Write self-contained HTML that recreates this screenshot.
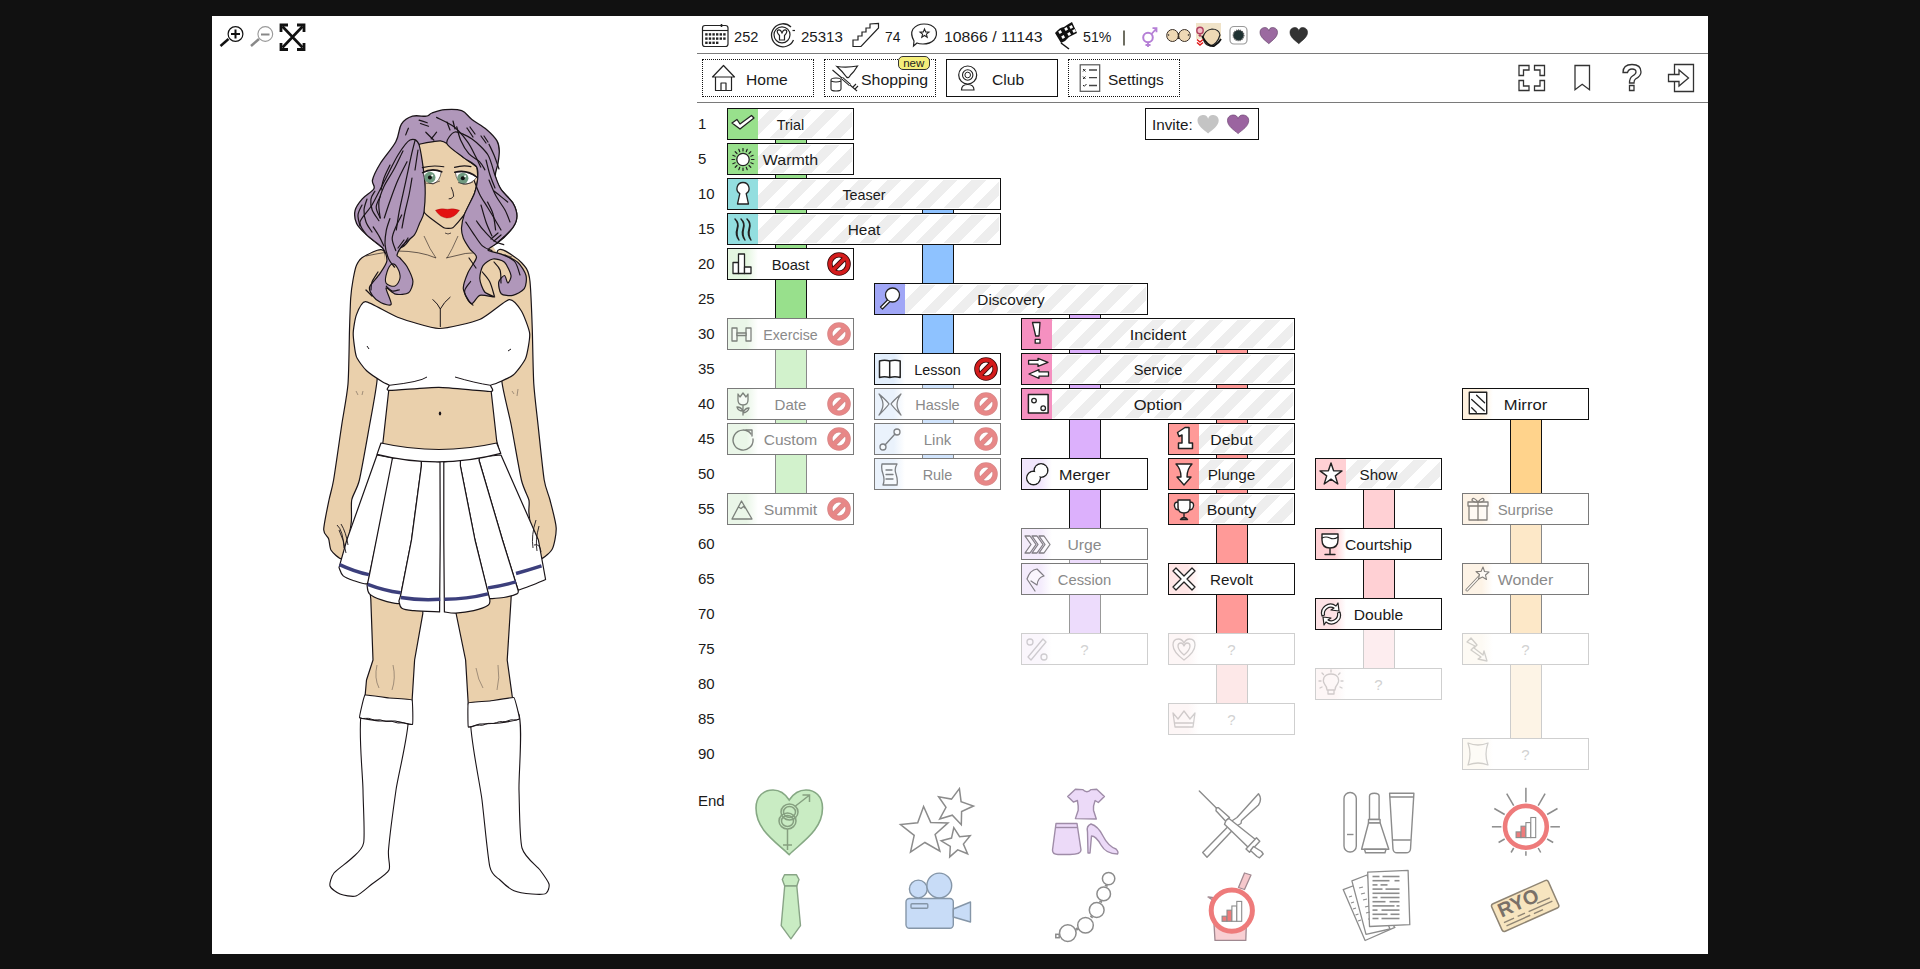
<!DOCTYPE html>
<html><head><meta charset="utf-8">
<style>
*{box-sizing:border-box}
html,body{margin:0;padding:0}
body{width:1920px;height:969px;background:#111;position:relative;overflow:hidden;font-family:"Liberation Sans",sans-serif;color:#1a1a1a}
#panel{position:absolute;left:212px;top:16px;width:1496px;height:938px;background:#fff}
.abs{position:absolute}
.hline{position:absolute;left:697px;width:1011px;height:1px;background:#7a7a7a}
.stat{position:absolute;top:27.7px;font-size:15.4px;line-height:18px;color:#1a1a1a;white-space:nowrap}
.nav{position:absolute;top:59px;width:112px;height:38px;border:1px dotted #111}
.nav.sel{border:1px solid #111}
.nav .nt{position:absolute;top:10.6px;font-size:15.5px;line-height:18px;color:#1a1a1a;white-space:nowrap}
.badge{position:absolute;left:898px;top:55.5px;width:31.5px;height:14px;background:#f5ee7a;border:1px solid #333;border-radius:5px;font-size:11.5px;line-height:12px;text-align:center;color:#222}
.invite{position:absolute;left:1145px;top:108px;width:114px;height:32px;border:1px solid #111;background:#fff}
.invite .it{position:absolute;left:6px;top:7.5px;font-size:15px;line-height:18px;color:#1a1a1a}
.lbl{position:absolute;left:698px;font-size:15px;line-height:18px;color:#1a1a1a}
.bar{position:absolute;width:32px;border-left:1px solid #111;border-right:1px solid #111}
.sk{position:absolute;height:32px;border:1px solid #111;background:#fff;overflow:hidden}
.sk.done::before{content:'';position:absolute;left:30px;top:1px;right:1px;bottom:1px;background:repeating-linear-gradient(135deg,#fff 0px,#fff 10px,#eeeeee 10px,#eeeeee 20px);background-size:400px 400px;background-repeat:no-repeat;background-position:-3px 0}
.sk.done.s2::before{background-position:-26.5px 0}
.sk .ic{position:absolute;left:0;top:0;width:30px;height:30px}
.sk .ic svg{position:absolute;left:0;top:0}
.sk .t{position:absolute;left:0;right:0;top:6.5px;text-align:center;font-size:15px;line-height:18px;color:#1a1a1a;white-space:nowrap}
.sk .forb{position:absolute;right:2px;top:3px;color:#cc1a1a}
.sk.fade,.sk.fadeblock{border-color:#7a7a7a}
.sk.fade .t,.sk.fadeblock .t{color:#8a8a8a}
.sk.fadeblock .forb{color:#e78787}
.sk.ghost{border-color:#cfcfcf}
.sk.ghost .t{color:#d2d2d2}
.sk.fade .ic svg,.sk.fadeblock .ic svg{opacity:.55}
.sk.ghost .ic svg{opacity:.2}
</style></head><body>
<div id="panel"></div>

<svg style="position:absolute;left:0;top:0" width="1920" height="969" viewBox="0 0 1920 969"><path d="M385.0,253.0 C383.1,244.4 367.3,255.1 364.0,256.5 C360.7,257.9 357.9,262.3 356.6,265.0 C355.3,267.7 353.7,276.1 353.0,280.0 C352.3,283.9 351.1,292.2 350.7,298.0 C350.3,303.8 349.8,320.0 349.5,330.0 C349.2,340.0 348.9,373.0 348.0,384.0 C347.1,395.0 343.5,413.3 341.8,424.5 C340.1,435.7 335.1,471.2 333.6,480.0 C332.1,488.8 330.2,494.2 329.0,500.0 C327.8,505.8 323.7,525.2 323.7,529.7 C323.7,534.2 327.7,536.4 328.6,538.8 C329.5,541.2 329.7,548.0 331.1,550.3 C332.5,552.6 338.9,558.4 340.6,558.6 C342.3,558.8 344.8,556.3 346.0,552.0 C347.2,547.7 350.6,528.1 351.3,522.0 C352.0,515.9 350.8,504.9 351.7,500.0 C352.6,495.1 357.3,488.8 359.4,480.0 C361.5,471.2 367.6,436.1 369.7,424.5 C371.8,412.9 375.8,392.0 377.0,381.0 C378.2,370.0 379.1,344.9 380.0,330.0 C380.9,315.1 386.9,261.6 385.0,253.0 Z" fill="#ead0ac" stroke="#1a1418" stroke-width="1.2" stroke-linejoin="round" stroke-linecap="round"/><path d="M497.0,252.4 C498.8,244.0 512.3,255.8 515.7,257.7 C519.1,259.6 524.6,265.6 526.3,268.4 C528.0,271.2 529.3,274.3 530.0,281.5 C530.7,288.7 531.9,318.0 532.3,330.0 C532.7,342.0 533.1,373.0 533.8,384.0 C534.5,395.0 536.8,413.3 538.0,424.5 C539.2,435.7 542.8,471.2 544.2,480.0 C545.6,488.8 548.6,494.4 550.0,500.0 C551.4,505.6 556.0,522.2 556.2,528.0 C556.4,533.8 554.1,545.8 552.0,549.5 C549.9,553.2 540.3,560.9 538.0,559.4 C535.7,557.9 533.3,542.5 532.2,537.0 C531.1,531.5 529.3,516.7 528.9,512.4 C528.5,508.1 529.8,503.8 528.9,500.0 C528.0,496.2 523.5,488.8 521.4,480.0 C519.3,471.2 513.4,436.1 511.1,424.5 C508.8,412.9 503.1,392.0 501.8,381.0 C500.5,370.0 500.6,345.0 500.0,330.0 C499.4,315.0 495.2,260.8 497.0,252.4 Z" fill="#ead0ac" stroke="#1a1418" stroke-width="1.2" stroke-linejoin="round" stroke-linecap="round"/><path d="M385,253 L400,228 L420,205 L470,205 L482,228 L497,253 L505,330 L490.5,385.3 L496.7,441 L507,480 L380,480 L383.1,441 L389.3,385.3 L375,330 Z" fill="#ead0ac" stroke="none" stroke-width="1.2" stroke-linejoin="round" /><path d="M389.3,385.3 L383.1,441 L377,480 M490.5,385.3 L496.7,441 L507,480" fill="none" stroke="#1a1418" stroke-width="1.2"/><path d="M366,256 Q385,252 397,251 Q420,251 436,258 M446,258 Q465,252 485,252 Q500,253 512,257" fill="none" stroke="#1a1418" stroke-width="0.8" opacity="0.8"/><path d="M424,236 Q430,250 436,258 M458,236 Q452,250 447,258" fill="none" stroke="#1a1418" stroke-width="0.7" opacity="0.8"/><path d="M368,575 L423,575 L422.8,613.6 L414.6,660 L412,702 L365,697 L366.5,680 L373,660 L370.8,599 Z" fill="#ead0ac" stroke="#1a1418" stroke-width="1.2" stroke-linejoin="round" /><path d="M458,575 L512,575 L511,600 L507.2,660 L512.6,699 L468.3,705 L465.6,660 L456,613 Z" fill="#ead0ac" stroke="#1a1418" stroke-width="1.2" stroke-linejoin="round" /><path d="M377,665 Q374,678 379,688 M393,665 Q396,678 392,690 M476,668 Q478,680 483,688 M498,665 Q500,678 497,690" fill="none" stroke="#1a1418" stroke-width="0.6" opacity="0.6"/><path d="M362.3,710.0 C357.1,719.1 362.8,774.5 363.0,790.0 C363.2,805.5 365.0,834.6 363.7,842.5 C362.4,850.4 355.5,854.4 352.0,858.0 C348.5,861.6 336.6,869.7 334.0,873.0 C331.4,876.3 329.3,883.5 330.0,886.0 C330.7,888.5 337.0,892.8 340.0,894.0 C343.0,895.2 352.3,897.2 356.0,896.0 C359.7,894.8 368.1,887.0 372.0,884.0 C375.9,881.0 387.1,874.0 389.0,870.0 C390.9,866.0 387.7,859.3 388.5,850.0 C389.3,840.7 393.7,806.1 396.0,790.0 C398.3,773.9 411.9,721.3 408.0,712.0 C404.1,702.7 367.6,700.9 362.3,710.0 Z" fill="#fff" stroke="#1a1418" stroke-width="1.1" stroke-linejoin="round" stroke-linecap="round"/><path d="M365.0,695.0 C366.0,694.3 387.4,697.8 389.0,698.0 C390.6,698.2 411.2,699.1 412.0,700.0 C412.8,700.9 413.1,723.7 412.5,724.4 C411.9,725.1 396.1,721.1 395.0,721.0 C393.9,720.9 381.2,721.1 380.0,721.0 C378.8,720.9 360.1,718.6 359.6,717.7 C359.1,716.8 364.0,695.7 365.0,695.0 Z" fill="#fff" stroke="#1a1418" stroke-width="1.1" stroke-linejoin="round" stroke-linecap="round"/><path d="M471.0,712.0 C466.8,722.3 479.8,782.0 482.0,800.0 C484.2,818.0 487.7,857.3 489.8,866.6 C491.9,875.9 497.2,877.2 500.0,880.0 C502.8,882.8 510.3,889.1 514.0,890.7 C517.7,892.3 528.3,893.7 532.0,894.0 C535.7,894.3 544.0,894.6 546.0,893.4 C548.0,892.2 549.7,886.7 549.0,884.0 C548.3,881.3 543.1,874.2 540.0,870.0 C536.9,865.8 524.5,857.3 522.0,848.0 C519.5,838.7 519.5,805.9 519.0,790.0 C518.5,774.1 523.6,721.1 518.0,712.0 C512.4,702.9 475.2,701.7 471.0,712.0 Z" fill="#fff" stroke="#1a1418" stroke-width="1.1" stroke-linejoin="round" stroke-linecap="round"/><path d="M468.3,703.0 C469.0,702.1 488.5,701.2 490.0,701.0 C491.5,700.8 513.0,697.0 514.0,697.6 C515.0,698.2 519.8,718.2 519.3,719.0 C518.8,719.8 501.3,722.8 500.0,723.0 C498.7,723.2 481.1,723.9 480.0,724.0 C478.9,724.1 468.7,727.7 468.3,727.0 C467.9,726.3 467.6,703.9 468.3,703.0 Z" fill="#fff" stroke="#1a1418" stroke-width="1.1" stroke-linejoin="round" stroke-linecap="round"/><path d="M359.6,717.7 Q362.5,719.0 365.5,718.4 Q368.4,717.9 371.4,719.2 Q374.3,720.5 377.2,719.9 Q380.2,719.4 383.1,720.7 Q386.1,721.9 389.0,721.4 Q391.9,720.9 394.9,722.2 Q397.8,723.4 400.7,722.9 Q403.7,722.4 406.6,723.7 Q409.6,724.9 412.5,724.4" fill="none" stroke="#1a1418" stroke-width="1"/><path d="M468.3,727 Q471.1,727.5 474.0,726.1 Q476.8,724.8 479.6,725.2 Q482.5,725.7 485.3,724.3 Q488.1,723.0 491.0,723.4 Q493.8,723.9 496.6,722.6 Q499.5,721.2 502.3,721.7 Q505.1,722.1 508.0,720.8 Q510.8,719.4 513.6,719.9 Q516.5,720.3 519.3,719.0" fill="none" stroke="#1a1418" stroke-width="1"/><path d="M377,452 L346.8,540 L339,567.6 L367,586 L399,603 L440,610 L488,599 L517,589 L544,576 L538.4,540 L501,452 Z" fill="#fff"/><path d="M377,455 L392.5,458 L392.5,466 L369.5,574.7 C369.1,576.2 369.7,582.7 367.1,583.7 C364.5,584.7 358.0,582.0 354.0,580.7 C350.0,579.4 345.7,578.1 343.2,575.9 C340.7,573.7 339.7,569.0 339.0,567.6 L346.8,540 Z" fill="#fff" stroke="#1a1418" stroke-width="1.2" stroke-linejoin="round"/><path d="M501,455 L538.4,540 L545.6,579.5 C543.2,580.5 535.8,583.7 531.2,585.5 C526.6,587.3 520.3,589.5 518.1,590.3 L502.5,540 L479.1,460.5 L479.1,457 Z" fill="#fff" stroke="#1a1418" stroke-width="1.2" stroke-linejoin="round"/><path d="M392.5,458 L421.4,460 L421.4,466 L411.5,540 L400.7,595.1 C400.5,596.5 402.7,602.7 399.5,603.5 C396.3,604.3 386.5,601.5 381.5,599.9 C376.5,598.3 371.9,596.3 369.5,593.9 C367.1,591.5 367.5,586.9 367.1,585.5 L369.5,574.7 Z" fill="#fff" stroke="#1a1418" stroke-width="1.2" stroke-linejoin="round"/><path d="M479.1,457 L479.1,460.5 L502.5,540 L518.1,590.3 C517.9,590.9 519.3,592.7 516.9,593.9 C514.5,595.1 508.3,596.7 503.7,597.5 C499.1,598.3 491.7,598.5 489.3,598.7 L475,540 L460.4,466 L460.4,460 Z" fill="#fff" stroke="#1a1418" stroke-width="1.2" stroke-linejoin="round"/><path d="M421.4,460 L440,462 L440.2,540 L439.6,611.9 C435.3,611.7 420.2,611.3 413.9,610.7 C407.6,610.1 404.4,609.9 401.9,608.3 C399.4,606.7 399.4,602.3 398.9,601.1 L400.7,595.1 L411.5,540 L421.4,466 Z" fill="#fff" stroke="#1a1418" stroke-width="1.2" stroke-linejoin="round"/><path d="M443.8,462 L460.4,460 L460.4,466 L475,540 L489.9,599.9 C489.6,600.8 490.8,603.5 488.1,605.3 C485.4,607.1 479.1,609.4 473.7,610.7 C468.3,612.0 460.7,612.9 455.8,613.1 C450.9,613.3 446.3,612.1 444.4,611.9 L443.8,540 Z" fill="#fff" stroke="#1a1418" stroke-width="1.2" stroke-linejoin="round"/><path d="M381,443 Q439,456 496.7,443 L500.8,453.4 Q439,470 377,454.4 Z" fill="#fff" stroke="#1a1418" stroke-width="1.2" stroke-linejoin="round"/><path d="M339.6,564.6 Q353.75,571.3499999999999 368.9,574.7" fill="none" stroke="#3c3f7c" stroke-width="3.4"/><path d="M367.7,584.3 Q383.8,590.5 400.7,592.7" fill="none" stroke="#3c3f7c" stroke-width="3.4"/><path d="M400.7,597.5 Q419.55,600.6 440.2,599.3" fill="none" stroke="#3c3f7c" stroke-width="3.4"/><path d="M444.4,599.3 Q465.8,599.4000000000001 488,593.9" fill="none" stroke="#3c3f7c" stroke-width="3.4"/><path d="M488,587.9 Q500.0,586.1 516,581.9" fill="none" stroke="#3c3f7c" stroke-width="3.4"/><path d="M516,573.5 Q527.25,570.35 541.5,565.8" fill="none" stroke="#3c3f7c" stroke-width="3.4"/><path d="M337,525 Q343,530 344,548 M339,530 Q344,540 346,553 M341,524 Q346,532 348,545 M536,520 Q531,535 533,548 M539,526 Q535,540 537,551 M534,545 Q540,543 541,552" fill="none" stroke="#1a1418" stroke-width="0.9"/><path d="M365.6,301.7 C361.5,301.5 357.5,311.9 356.3,315.1 C355.1,318.3 353.2,329.6 353.2,333.7 C353.2,337.8 355.0,352.7 356.3,356.4 C357.6,360.1 363.9,368.2 366.6,370.8 C369.3,373.4 380.8,380.8 383.1,382.2 C385.4,383.6 388.7,384.5 389.3,385.3 C389.9,386.1 384.3,390.2 389.3,390.4 C394.3,390.6 428.8,387.2 438.9,387.3 C449.0,387.4 485.3,391.7 490.5,391.5 C495.7,391.3 489.9,386.1 490.5,385.3 C491.1,384.5 494.4,384.2 496.7,383.2 C499.0,382.2 510.3,377.5 513.2,375.0 C516.1,372.5 524.0,362.5 525.6,358.4 C527.2,354.3 530.1,338.4 529.7,333.7 C529.3,329.0 523.5,314.4 521.4,311.0 C519.3,307.6 513.1,298.8 509.0,299.6 C504.9,300.4 487.2,316.3 480.2,319.2 C473.2,322.1 447.2,328.7 438.9,328.5 C430.6,328.3 404.9,319.9 397.6,317.2 C390.3,314.5 369.7,301.9 365.6,301.7 Z" fill="#fff" stroke="#1a1418" stroke-width="1.2" stroke-linejoin="round" stroke-linecap="round"/><path d="M389.3,385.3 Q420,382 427,377 M455,377 Q475,383 490.5,385.3 M367,346 L369,349 M511,349 L508,351" fill="none" stroke="#1a1418" stroke-width="1"/><path d="M432.6,299.3 Q438,304 440.3,309 Q444,302 450.4,297 M440.3,309 L440.3,327" fill="none" stroke="#1a1418" stroke-width="1"/><ellipse cx="440" cy="413.5" rx="1.2" ry="2" fill="#1a1418"/><path d="M356,391 L358,395 M363,391 L362,395 M512,391 L514,394 M518,389 L517,396" fill="none" stroke="#1a1418" stroke-width="0.6" opacity="0.6"/><path d="M432.0,113.0 C435.1,111.9 440.1,110.1 445.0,109.7 C449.9,109.3 457.2,109.1 461.7,110.7 C466.2,112.3 467.7,116.3 471.9,119.5 C476.1,122.7 482.6,126.1 486.8,129.7 C491.0,133.3 494.9,137.3 497.0,140.9 C499.1,144.5 499.2,147.2 499.3,151.0 C499.4,154.8 498.5,159.8 497.9,164.0 C497.2,168.2 494.8,172.2 495.4,176.5 C495.9,180.8 498.3,185.3 501.2,189.7 C504.1,194.1 510.2,198.5 512.8,202.9 C515.4,207.3 516.9,212.0 516.9,216.1 C516.9,220.2 516.0,223.3 512.8,227.7 C509.6,232.1 502.5,239.4 497.9,242.5 C493.3,245.6 490.0,247.8 485.0,246.0 C480.0,244.2 471.8,237.2 468.0,232.0 C464.2,226.8 466.0,220.3 462.0,215.0 C458.0,209.7 450.3,200.8 444.0,200.0 C437.7,199.2 428.7,205.3 424.0,210.0 C419.3,214.7 419.3,222.0 416.0,228.0 C412.7,234.0 408.9,242.3 404.0,246.0 C399.1,249.7 390.5,249.7 386.9,250.0 C383.3,250.3 386.0,250.4 382.6,247.9 C379.2,245.4 371.0,239.0 366.7,234.9 C362.4,230.8 358.5,227.5 356.6,223.4 C354.7,219.3 354.2,214.4 355.1,210.3 C356.1,206.2 359.2,202.4 362.3,198.8 C365.4,195.2 372.2,191.8 373.9,188.7 C375.6,185.6 371.5,184.1 372.5,180.0 C373.5,175.9 376.1,170.4 380.0,164.0 C383.9,157.6 392.2,148.5 395.8,141.8 C399.4,135.2 398.6,128.4 401.4,124.1 C404.2,119.8 408.3,117.5 412.5,116.2 C416.7,114.9 423.1,116.7 426.4,116.2 C429.6,115.7 428.9,114.1 432.0,113.0 Z" fill="#b097ba" stroke="#1a1418" stroke-width="1.3" stroke-linejoin="round" stroke-linecap="round"/><path d="M419.0,144.6 C419.8,143.7 430.6,142.0 432.0,141.8 C433.4,141.6 439.4,140.8 440.4,140.9 C441.4,141.0 445.4,142.5 446.9,143.6 C448.4,144.7 461.6,156.0 463.6,157.6 C465.6,159.2 475.7,165.4 476.6,166.9 C477.5,168.4 477.8,178.0 477.6,179.8 C477.4,181.6 475.2,191.5 474.3,193.8 C473.4,196.1 465.8,212.1 464.4,214.4 C463.0,216.7 454.2,226.8 452.8,227.7 C451.4,228.6 445.7,228.7 443.8,227.7 C441.9,226.7 425.3,215.0 424.0,212.0 C422.7,209.0 425.0,186.1 424.8,182.3 C424.6,178.5 421.0,157.5 420.6,155.0 C420.2,152.5 418.2,145.5 419.0,144.6 Z" fill="#ead0ac" stroke="#1a1418" stroke-width="1.2" stroke-linejoin="round" stroke-linecap="round"/><path d="M419.0,144.6 C421.0,150.2 424.1,173.3 424.8,182.3 C425.5,191.3 424.7,206.5 424.0,212.0 C423.3,217.5 420.8,220.3 419.5,223.4 C418.2,226.5 416.6,232.0 414.4,234.9 C412.2,237.8 405.1,242.3 402.8,245.0 C400.5,247.7 397.4,253.3 397.0,255.0 C396.6,256.7 398.7,256.4 400.0,258.0 C401.3,259.6 405.4,263.6 407.1,266.7 C408.8,269.8 412.7,277.7 412.9,281.2 C413.1,284.7 410.9,291.0 408.6,292.7 C406.3,294.4 398.6,294.8 395.6,294.2 C392.6,293.6 386.6,286.7 386.0,288.0 C385.4,289.3 391.9,302.3 391.2,304.3 C390.5,306.3 383.6,304.0 381.1,302.8 C378.6,301.6 374.0,297.7 372.5,295.6 C371.0,293.5 368.6,289.8 369.6,286.9 C370.6,284.0 377.4,277.4 379.7,273.9 C382.0,270.4 386.5,264.4 386.9,260.9 C387.3,257.4 385.3,251.4 382.6,247.9 C379.9,244.4 369.7,238.4 366.7,234.9 C363.7,231.4 359.3,226.0 360.0,222.0 C360.7,218.0 368.7,210.6 372.0,205.0 C375.3,199.4 381.5,186.7 385.0,180.0 C388.5,173.3 394.7,160.3 398.0,155.0 C401.3,149.7 407.2,141.4 410.0,140.0 C412.8,138.6 417.0,139.0 419.0,144.6 Z" fill="#b097ba" stroke="#1a1418" stroke-width="1.2" stroke-linejoin="round" stroke-linecap="round"/><path d="M386.0,283.0 C384.7,280.7 386.0,275.2 387.0,272.0 C388.0,268.8 390.2,264.7 392.0,264.0 C393.8,263.3 396.2,265.7 397.5,268.0 C398.8,270.3 400.4,275.0 400.0,278.0 C399.6,281.0 397.3,285.2 395.0,286.0 C392.7,286.8 387.3,285.3 386.0,283.0 Z" fill="#ead0ac" stroke="#1a1418" stroke-width="1.1" stroke-linejoin="round" stroke-linecap="round"/><path d="M446.9,143.6 C448.0,147.0 459.6,154.5 463.6,157.6 C467.6,160.7 474.7,163.9 476.6,166.9 C478.5,169.9 477.9,176.2 477.6,179.8 C477.3,183.4 476.1,189.2 474.3,193.8 C472.5,198.4 466.1,209.8 464.4,214.4 C462.7,219.0 461.6,224.9 461.5,228.0 C461.4,231.1 462.2,235.2 463.3,238.0 C464.4,240.8 468.1,246.5 469.9,249.1 C471.7,251.7 476.7,254.3 476.5,257.4 C476.3,260.5 470.0,268.0 468.2,272.2 C466.4,276.4 462.9,284.5 463.3,288.7 C463.7,292.9 469.3,302.7 471.5,303.6 C473.7,304.5 476.7,296.2 479.8,295.3 C482.9,294.4 493.9,297.4 494.6,297.0 C495.3,296.6 486.7,294.4 484.7,292.0 C482.7,289.6 480.0,282.3 479.8,278.8 C479.6,275.3 481.2,268.2 483.0,265.6 C484.8,263.0 490.1,259.4 493.0,259.0 C495.9,258.6 502.1,260.1 504.5,262.3 C506.9,264.5 510.6,272.7 511.0,275.5 C511.4,278.3 508.7,283.0 507.8,283.0 C506.9,283.0 505.7,275.6 504.5,275.5 C503.3,275.4 499.1,279.7 498.7,282.1 C498.3,284.5 499.3,291.9 501.2,293.7 C503.1,295.5 509.7,296.0 512.8,295.3 C515.9,294.6 522.5,291.3 524.3,288.7 C526.1,286.1 526.9,279.0 526.0,275.5 C525.1,272.0 521.0,265.2 517.7,262.3 C514.4,259.4 505.2,255.7 501.2,254.1 C497.2,252.5 488.4,251.5 488.0,250.0 C487.6,248.5 494.6,245.5 497.9,242.5 C501.2,239.5 510.3,231.2 512.8,227.7 C515.3,224.2 516.9,219.4 516.9,216.1 C516.9,212.8 514.9,206.4 512.8,202.9 C510.7,199.4 503.5,193.2 501.2,189.7 C498.9,186.2 497.2,181.1 495.4,176.5 C493.6,171.9 491.1,160.0 488.0,155.0 C484.9,150.0 476.4,142.1 472.0,139.0 C467.6,135.9 458.3,131.4 455.0,132.0 C451.7,132.6 445.8,140.2 446.9,143.6 Z" fill="#b097ba" stroke="#1a1418" stroke-width="1.2" stroke-linejoin="round" stroke-linecap="round"/><path d="M415.1,140.2 C414.4,142.9 412.4,150.5 411.1,156.3 C409.8,162.1 408.5,168.8 407.1,175.1 C405.8,181.4 404.4,187.6 403.0,193.9 C401.6,200.2 400.1,206.7 399.0,212.7 C397.9,218.7 396.8,227.1 396.3,230.0" fill="none" stroke="#1a1418" stroke-width="1.2" stroke-linecap="round"/><path d="M403.0,151.0 C401.4,154.1 396.8,164.0 393.7,169.8 C390.6,175.6 386.8,180.4 384.3,185.8 C381.8,191.2 379.6,196.6 378.9,202.0 C378.2,207.4 380.0,215.3 380.2,218.0" fill="none" stroke="#1a1418" stroke-width="1.2" stroke-linecap="round"/><path d="M407.0,161.7 C405.4,164.8 400.6,173.8 397.7,180.5 C394.8,187.2 391.8,195.8 389.6,202.0 C387.4,208.2 385.2,215.3 384.3,218.0" fill="none" stroke="#1a1418" stroke-width="1.2" stroke-linecap="round"/><path d="M374.9,191.2 C374.2,192.5 371.3,196.2 370.9,199.3 C370.4,202.4 370.9,206.4 372.2,210.0 C373.5,213.6 377.8,218.9 378.9,220.7" fill="none" stroke="#1a1418" stroke-width="1.2" stroke-linecap="round"/><path d="M380.2,196.6 C379.5,198.4 376.2,203.7 376.2,207.3 C376.2,210.9 379.5,216.2 380.2,218.0" fill="none" stroke="#1a1418" stroke-width="1.2" stroke-linecap="round"/><path d="M408.4,128.2 C407.9,129.3 406.1,133.8 405.7,134.9" fill="none" stroke="#1a1418" stroke-width="1.2" stroke-linecap="round"/><path d="M419.1,120.1 C420.5,120.5 425.9,122.3 427.2,122.8" fill="none" stroke="#1a1418" stroke-width="1.2" stroke-linecap="round"/><path d="M420.5,123.5 C421.8,124.0 427.2,125.8 428.5,126.2" fill="none" stroke="#1a1418" stroke-width="1.2" stroke-linecap="round"/><path d="M425.8,132.2 C427.1,133.5 432.5,138.9 433.9,140.2" fill="none" stroke="#1a1418" stroke-width="1.2" stroke-linecap="round"/><path d="M436.6,132.2 C435.7,133.3 432.1,137.8 431.2,138.9" fill="none" stroke="#1a1418" stroke-width="1.2" stroke-linecap="round"/><path d="M436.6,117.4 C439.5,119.0 448.9,122.8 454.0,126.8 C459.1,130.8 463.8,136.7 467.4,141.6 C471.0,146.5 473.3,152.1 475.5,156.3 C477.7,160.6 479.9,165.3 480.8,167.1" fill="none" stroke="#1a1418" stroke-width="1.2" stroke-linecap="round"/><path d="M456.7,126.8 C457.4,129.0 458.7,135.7 460.7,140.2 C462.7,144.7 465.7,150.1 468.8,153.7 C471.9,157.3 476.8,159.0 479.5,161.7 C482.2,164.4 484.0,168.5 484.9,169.8" fill="none" stroke="#1a1418" stroke-width="1.2" stroke-linecap="round"/><path d="M447.0,122.0 C447.5,123.3 449.5,128.7 450.0,130.0" fill="none" stroke="#1a1418" stroke-width="1.2" stroke-linecap="round"/><path d="M453.0,121.0 C453.3,122.3 454.7,127.7 455.0,129.0" fill="none" stroke="#1a1418" stroke-width="1.2" stroke-linecap="round"/><path d="M467.0,128.0 C468.0,129.5 472.0,135.5 473.0,137.0" fill="none" stroke="#1a1418" stroke-width="1.2" stroke-linecap="round"/><path d="M470.0,127.0 C470.8,128.2 474.2,132.8 475.0,134.0" fill="none" stroke="#1a1418" stroke-width="1.2" stroke-linecap="round"/><path d="M489.0,144.2 C489.8,146.0 492.3,150.9 494.0,155.0 C495.7,159.1 498.2,166.7 499.0,169.0" fill="none" stroke="#1a1418" stroke-width="1.2" stroke-linecap="round"/><path d="M481.0,136.0 C481.8,137.2 485.2,141.8 486.0,143.0" fill="none" stroke="#1a1418" stroke-width="1.2" stroke-linecap="round"/><path d="M484.0,136.0 C484.7,137.0 487.3,141.0 488.0,142.0" fill="none" stroke="#1a1418" stroke-width="1.2" stroke-linecap="round"/><path d="M474.1,180.5 C475.0,182.7 477.3,189.4 479.5,193.9 C481.7,198.4 484.8,202.8 487.5,207.3 C490.2,211.8 493.4,216.9 495.6,220.7 C497.9,224.5 500.1,228.4 501.0,230.0" fill="none" stroke="#1a1418" stroke-width="1.2" stroke-linecap="round"/><path d="M494.3,191.2 C495.4,192.1 498.8,194.8 501.0,196.6 C503.2,198.4 506.6,201.1 507.7,202.0" fill="none" stroke="#1a1418" stroke-width="1.2" stroke-linecap="round"/><path d="M487.5,202.0 C488.4,204.0 491.6,209.3 493.0,214.0 C494.4,218.7 495.2,227.3 495.6,230.0" fill="none" stroke="#1a1418" stroke-width="1.2" stroke-linecap="round"/><path d="M373.2,226.9 C374.2,228.5 377.4,233.2 379.2,236.4 C381.0,239.6 383.1,244.3 383.9,245.9" fill="none" stroke="#1a1418" stroke-width="1.2" stroke-linecap="round"/><path d="M389.9,218.6 C389.3,220.6 387.1,226.1 386.3,230.4 C385.5,234.8 384.7,239.9 385.1,244.7 C385.5,249.4 387.1,255.1 388.7,258.9 C390.3,262.6 393.6,265.8 394.6,267.2" fill="none" stroke="#1a1418" stroke-width="1.2" stroke-linecap="round"/><path d="M401.7,215.0 C400.7,217.0 397.4,223.0 395.8,226.9 C394.2,230.8 392.2,234.8 392.2,238.7 C392.2,242.6 395.2,248.6 395.8,250.6" fill="none" stroke="#1a1418" stroke-width="1.2" stroke-linecap="round"/><path d="M386.3,286.2 C387.3,287.0 390.0,290.4 392.2,291.0 C394.4,291.6 398.1,290.0 399.3,289.8" fill="none" stroke="#1a1418" stroke-width="1.2" stroke-linecap="round"/><path d="M465.8,222.1 C467.0,223.9 470.1,228.8 472.9,232.8 C475.7,236.8 479.2,242.9 482.4,245.9 C485.6,248.9 490.3,249.8 491.9,250.6" fill="none" stroke="#1a1418" stroke-width="1.2" stroke-linecap="round"/><path d="M476.5,221.0 C477.7,222.6 480.7,227.1 483.7,230.4 C486.7,233.7 490.9,238.6 494.3,241.0 C497.7,243.4 502.2,244.1 503.8,244.7" fill="none" stroke="#1a1418" stroke-width="1.2" stroke-linecap="round"/><path d="M491.0,239.0 C492.2,238.0 496.8,234.0 498.0,233.0" fill="none" stroke="#1a1418" stroke-width="1.2" stroke-linecap="round"/><path d="M494.0,241.0 C495.2,240.0 499.8,236.0 501.0,235.0" fill="none" stroke="#1a1418" stroke-width="1.2" stroke-linecap="round"/><path d="M497.0,243.0 C498.2,242.0 502.8,238.0 504.0,237.0" fill="none" stroke="#1a1418" stroke-width="1.2" stroke-linecap="round"/><path d="M470.6,281.5 C469.6,283.1 465.0,287.8 464.6,291.0 C464.2,294.2 466.8,298.1 468.2,300.5 C469.6,302.9 472.2,304.4 473.0,305.2" fill="none" stroke="#1a1418" stroke-width="1.2" stroke-linecap="round"/><path d="M482.4,272.0 C483.6,273.6 487.6,277.6 489.6,281.5 C491.6,285.4 493.5,293.3 494.3,295.7" fill="none" stroke="#1a1418" stroke-width="1.2" stroke-linecap="round"/><path d="M366.0,290.0 C367.0,291.0 371.0,295.0 372.0,296.0" fill="none" stroke="#1a1418" stroke-width="1.2" stroke-linecap="round"/><path d="M404.0,240.0 C403.0,241.3 399.0,246.7 398.0,248.0" fill="none" stroke="#1a1418" stroke-width="1.2" stroke-linecap="round"/><path d="M408.0,238.0 C407.2,239.3 403.8,244.7 403.0,246.0" fill="none" stroke="#1a1418" stroke-width="1.2" stroke-linecap="round"/><path d="M362.0,205.0 C361.3,206.7 358.3,211.5 358.0,215.0 C357.7,218.5 359.7,224.2 360.0,226.0" fill="none" stroke="#1a1418" stroke-width="1.2" stroke-linecap="round"/><path d="M367.0,199.0 C366.5,200.8 364.2,206.2 364.0,210.0 C363.8,213.8 364.7,218.3 366.0,222.0 C367.3,225.7 371.0,230.3 372.0,232.0" fill="none" stroke="#1a1418" stroke-width="1.2" stroke-linecap="round"/><path d="M390.0,165.0 C389.0,167.2 385.5,173.8 384.0,178.0 C382.5,182.2 381.5,188.0 381.0,190.0" fill="none" stroke="#1a1418" stroke-width="1.2" stroke-linecap="round"/><path d="M412.0,178.0 C411.5,180.8 410.2,189.3 409.0,195.0 C407.8,200.7 406.2,206.5 405.0,212.0 C403.8,217.5 402.5,225.3 402.0,228.0" fill="none" stroke="#1a1418" stroke-width="1.2" stroke-linecap="round"/><path d="M418.0,150.0 C417.5,153.3 415.5,166.7 415.0,170.0" fill="none" stroke="#1a1418" stroke-width="1.2" stroke-linecap="round"/><path d="M486.0,160.0 C486.7,162.5 488.5,170.3 490.0,175.0 C491.5,179.7 494.2,185.8 495.0,188.0" fill="none" stroke="#1a1418" stroke-width="1.2" stroke-linecap="round"/><path d="M489.0,180.0 C490.2,182.7 493.3,191.0 496.0,196.0 C498.7,201.0 502.7,205.7 505.0,210.0 C507.3,214.3 509.2,220.0 510.0,222.0" fill="none" stroke="#1a1418" stroke-width="1.2" stroke-linecap="round"/><path d="M481.0,205.0 C481.8,207.8 484.2,216.8 486.0,222.0 C487.8,227.2 491.0,233.7 492.0,236.0" fill="none" stroke="#1a1418" stroke-width="1.2" stroke-linecap="round"/><path d="M469.0,258.0 C470.2,259.7 474.8,266.3 476.0,268.0" fill="none" stroke="#1a1418" stroke-width="1.2" stroke-linecap="round"/><path d="M505.0,255.0 C506.7,256.2 512.5,258.7 515.0,262.0 C517.5,265.3 519.2,272.8 520.0,275.0" fill="none" stroke="#1a1418" stroke-width="1.2" stroke-linecap="round"/><path d="M494.0,262.0 C495.0,263.3 498.8,266.5 500.0,270.0 C501.2,273.5 500.8,280.8 501.0,283.0" fill="none" stroke="#1a1418" stroke-width="1.2" stroke-linecap="round"/><path d="M378.0,272.0 C377.0,273.7 373.2,279.0 372.0,282.0 C370.8,285.0 371.2,288.7 371.0,290.0" fill="none" stroke="#1a1418" stroke-width="1.2" stroke-linecap="round"/><path d="M423.1,172.3 Q433,168.5 441.3,171.8 Q440,181.5 433,184 Q425.5,183.5 423.1,172.3 Z" fill="#fff" stroke="#1a1418" stroke-width="0.6"/><path d="M455.3,172.2 Q467,170 476.8,177.3 Q471,184.5 463.5,184.3 Q456.5,182 455.3,172.2 Z" fill="#fff" stroke="#1a1418" stroke-width="0.6"/><circle cx="429.9" cy="177.4" r="5.6" fill="#6f9a80"/><circle cx="429.9" cy="177.4" r="2" fill="#111"/><circle cx="432.2" cy="175.4" r="1" fill="#fff"/><circle cx="462.8" cy="178.3" r="5.6" fill="#6f9a80"/><circle cx="462.8" cy="178.3" r="2" fill="#111"/><circle cx="465.1" cy="176.3" r="1" fill="#fff"/><path d="M422.6,172.6 Q432,167.5 441.8,171.8 M454.8,172.2 Q467,169 477.3,177.5" fill="none" stroke="#1a1418" stroke-width="1.6" stroke-linecap="round"/><path d="M426,183.2 Q433,185 440,181 M458,182.5 Q466,185.5 473,182" fill="none" stroke="#1a1418" stroke-width="0.6"/><path d="M422.3,167.6 Q433,164.8 443.8,166.8 M454.5,167.4 Q463,164.8 471,166.6" fill="none" stroke="#1a1418" stroke-width="1.1" stroke-linecap="round"/><path d="M451.2,187.2 Q453.5,192 453.7,196.3 Q451,199.5 448.7,198.8" fill="none" stroke="#1a1418" stroke-width="0.9"/><path d="M435.5,210.3 Q441,208 447.5,209.3 Q453,208 459.5,210.3 Q454,218.5 446.5,218 Q439.5,217 435.5,210.3 Z" fill="#e31212" stroke="#a01010" stroke-width="0.4"/><path d="M445,233 Q448,235 451,233" fill="none" stroke="#1a1418" stroke-width="0.7"/></svg>
<div class="nav" style="left:702px"></div><div class="nav" style="left:824px"></div><div class="nav sel" style="left:946px"></div><div class="nav" style="left:1068px"></div><svg style="position:absolute;left:0;top:0" width="1920" height="969" viewBox="0 0 1920 969"><circle cx="235.5" cy="34" r="7.4" fill="none" stroke="#111" stroke-width="1.2"/><path d="M231,34 L240,34 M235.5,29.5 L235.5,38.5" stroke="#111" stroke-width="2"/><path d="M220.5,46 L228.5,39" stroke="#111" stroke-width="2.4"/><circle cx="265.3" cy="34" r="7.4" fill="none" stroke="#999" stroke-width="1.1"/><path d="M261,34.5 L269.5,34.5" stroke="#888" stroke-width="2"/><path d="M251,46 L259,39" stroke="#888" stroke-width="2.4"/><path d="M282.5,26.5 L302.5,47.5 M302.5,26.5 L282.5,47.5" stroke="#111" stroke-width="2.6"/><path d="M281,32 L281,25 L288,25 M297,25 L304,25 L304,32 M281,43 L281,49.5 L288,49.5 M297,49.5 L304,49.5 L304,43" fill="none" stroke="#111" stroke-width="2.8"/><rect x="702.5" y="25.5" width="25.5" height="21" rx="2.5" fill="none" stroke="#222" stroke-width="1.2"/><path d="M702.5,30.5 L728,30.5" stroke="#222" stroke-width="1.1"/><path d="M721.5,24 L721.5,27" stroke="#222" stroke-width="1.6"/><rect x="705.2" y="33.2" width="2.4" height="2.4" fill="#222"/><rect x="708.8" y="33.2" width="2.4" height="2.4" fill="#222"/><rect x="712.4" y="33.2" width="2.4" height="2.4" fill="#222"/><rect x="716.0" y="33.2" width="2.4" height="2.4" fill="#222"/><rect x="719.6" y="33.2" width="2.4" height="2.4" fill="#222"/><rect x="723.2" y="33.2" width="2.4" height="2.4" fill="#222"/><rect x="705.2" y="37.4" width="2.4" height="2.4" fill="#222"/><rect x="708.8" y="37.4" width="2.4" height="2.4" fill="#222"/><rect x="712.4" y="37.4" width="2.4" height="2.4" fill="#222"/><rect x="716.0" y="37.4" width="2.4" height="2.4" fill="#222"/><rect x="719.6" y="37.4" width="2.4" height="2.4" fill="#222"/><rect x="723.2" y="37.4" width="2.4" height="2.4" fill="#222"/><rect x="705.2" y="41.6" width="2.4" height="2.4" fill="#222"/><rect x="708.8" y="41.6" width="2.4" height="2.4" fill="#222"/><rect x="712.4" y="41.6" width="2.4" height="2.4" fill="#222"/><rect x="716.0" y="41.6" width="2.4" height="2.4" fill="#222"/><path d="M791,27 A11.5,11.5 0 1 0 793.5,40" fill="none" stroke="#222" stroke-width="1.3"/><path d="M792.5,30.5 L795,30.5" stroke="#222" stroke-width="1.2"/><circle cx="782" cy="34.8" r="8" fill="none" stroke="#222" stroke-width="1.2"/><path d="M777.5,30.5 Q779,29 781,31 L782,33 L783,31 Q785,29 786.5,30.5 Q787.5,32.5 784.5,35.5 L784.5,40 L779.5,40 L779.5,35.5 Q776.5,32.5 777.5,30.5 Z" fill="none" stroke="#222" stroke-width="1.2"/><path d="M853,40 L858,40 L858,36 L862,36 L862,32 L866,32 L866,28 L870,28 L870,24 L878.5,23.5 L878.5,28 L861,46.5 L853,46.5 Z" fill="none" stroke="#222" stroke-width="1.2"/><path d="M914,41 Q910,34 913,29 Q917,24 924,24 Q932,24 935.5,29 Q938,35 934,40 Q930,44 923,44 Q919,44 917,43 L913.5,46 Z" fill="none" stroke="#222" stroke-width="1.2"/><path d="M924.5,28.9 L925.7,31.9 L928.9,32.1 L926.4,34.1 L927.2,37.2 L924.5,35.5 L921.8,37.2 L922.6,34.1 L920.1,32.1 L923.3,31.9 Z" fill="none" stroke="#222" stroke-width="1.1"/><path d="M1055,33 Q1060,27 1064,27 Q1068,24 1072,22 L1077,33 Q1073,35 1069,37 Q1066,41 1061,43 Z" fill="#111"/><path d="M1061,43 L1069,49" stroke="#111" stroke-width="1.5"/><rect x="1058.7" y="30.7" width="2.8" height="2.8" fill="#fff" transform="rotate(-30 1060 32)"/><rect x="1064.7" y="27.7" width="2.8" height="2.8" fill="#fff" transform="rotate(-30 1066 29)"/><rect x="1069.7" y="25.7" width="2.8" height="2.8" fill="#fff" transform="rotate(-30 1071 27)"/><rect x="1061.7" y="35.7" width="2.8" height="2.8" fill="#fff" transform="rotate(-30 1063 37)"/><rect x="1067.7" y="32.7" width="2.8" height="2.8" fill="#fff" transform="rotate(-30 1069 34)"/><rect x="1072.7" y="29.7" width="2.8" height="2.8" fill="#fff" transform="rotate(-30 1074 31)"/><circle cx="1148" cy="37.5" r="4.8" fill="none" stroke="#b57fd6" stroke-width="2"/><path d="M1151.5,34 L1156,29 M1152.5,28.2 L1156.5,28.2 L1156.5,32.2 M1148,42.3 L1148,47 M1145.5,45 L1150.5,45" fill="none" stroke="#b57fd6" stroke-width="1.8"/><ellipse cx="1172.5" cy="35.5" rx="5.8" ry="6" fill="#efd9b5" stroke="#3a3028" stroke-width="1"/><ellipse cx="1184.5" cy="35.5" rx="5.8" ry="6" fill="#efd9b5" stroke="#3a3028" stroke-width="1"/><path d="M1178.5,33 L1178.5,39" stroke="#3a3028" stroke-width="1"/><circle cx="1168.5" cy="35" r="0.8" fill="#222"/><circle cx="1188.5" cy="35" r="0.8" fill="#222"/><rect x="1196" y="23" width="25" height="16" fill="#f0e3c8"/><path d="M1203,37 Q1205,30 1212,29 Q1219,29 1220,35 Q1217,45 1210,46 Q1204,45 1203,37 Z" fill="#efd9b5" stroke="#222" stroke-width="1.2"/><path d="M1202,36 Q1208,47 1214,46 Q1219,43 1221,39" fill="none" stroke="#111" stroke-width="1.8"/><circle cx="1200" cy="30.5" r="3.2" fill="#f3c0c8" stroke="#b04060" stroke-width="1.4"/><path d="M1200,34 L1200,37 M1198.5,35.5 L1201.5,35.5" stroke="#b04060" stroke-width="1.2"/><path d="M1197,39.5 L1200,42 L1203,39.5 M1197,42.5 L1200,45 L1203,42.5" fill="none" stroke="#e01818" stroke-width="1.5"/><rect x="1230" y="26.5" width="17" height="17.5" rx="4" fill="none" stroke="#999" stroke-width="1.2"/><circle cx="1238.5" cy="35.3" r="5.3" fill="#1d3030"/><circle cx="1238.5" cy="35.3" r="5.3" fill="none" stroke="#555" stroke-width="1.5" stroke-dasharray="1 1"/><path d="M1268.8,43.7 C1265.2,40.5 1260.0,37.2 1260.0,32.4 C1260.0,28.3 1263.5,27.5 1264.9,27.5 C1267.0,27.5 1268.2,28.8 1268.8,30.7 C1269.3,28.8 1270.5,27.5 1272.6,27.5 C1274.0,27.5 1277.5,28.3 1277.5,32.4 C1277.5,37.2 1272.2,40.5 1268.8,43.7 Z" fill="#9b6aa0" stroke="#5a3a60" stroke-width="0.6"/><path d="M1298.8,43.7 C1295.2,40.5 1290.0,37.2 1290.0,32.4 C1290.0,28.3 1293.5,27.5 1294.9,27.5 C1297.0,27.5 1298.2,28.8 1298.8,30.7 C1299.3,28.8 1300.5,27.5 1302.6,27.5 C1304.0,27.5 1307.5,28.3 1307.5,32.4 C1307.5,37.2 1302.2,40.5 1298.8,43.7 Z" fill="#333" stroke="#222" stroke-width="0.6"/><path d="M1124,30.5 L1124,45.5" stroke="#4a4a3a" stroke-width="1.6"/><path d="M712.5,77 L723.5,65.5 L734.5,77 Z M715.5,77 L715.5,90.5 L731.5,90.5 L731.5,77 M721,90.5 L721,83 L726,83 L726,90.5" fill="#fff" stroke="#222" stroke-width="1.2" stroke-linejoin="round"/><path d="M837,66.5 Q847,68 857.5,66 Q854,72 850.5,75 Q848.5,79 846.5,77 Q842,71 837,66.5 Z" fill="#fff" stroke="#222" stroke-width="1.2"/><path d="M832.5,70 L857,91" stroke="#222" stroke-width="1.1"/><path d="M842,78 L850,85" stroke="#222" stroke-width="2.6"/><path d="M842,78 L850,85" stroke="#fff" stroke-width="0.9"/><path d="M853,87 L856,84 M855,89 L858,86" stroke="#222" stroke-width="1.1"/><path d="M831,80 Q831,78 836,78 Q841,78 841,80 L841,89 Q841,91 836,91 Q831,91 831,89 Z M831,81 Q836,83 841,81" fill="#fff" stroke="#222" stroke-width="1.1"/><circle cx="967.7" cy="75" r="9" fill="#fff" stroke="#222" stroke-width="1.2"/><circle cx="967.7" cy="75" r="5.2" fill="none" stroke="#222" stroke-width="1.1"/><circle cx="967.7" cy="75" r="2.8" fill="none" stroke="#222" stroke-width="1"/><path d="M961.5,90 Q961.5,84.5 967.7,84.5 Q974,84.5 974,90 Z" fill="#fff" stroke="#222" stroke-width="1.2"/><rect x="1080.2" y="64.8" width="19.5" height="26.5" fill="#fff" stroke="#555" stroke-width="1.2"/><path d="M1083,69 L1085.5,71.5 M1085.5,69 L1083,71.5 M1083,76.5 L1085.5,79 M1085.5,76.5 L1083,79 M1083,85 L1084.3,86.3 L1086.5,84" fill="none" stroke="#222" stroke-width="1"/><path d="M1089,70 L1097,70 M1089,77.7 L1097,77.7 M1089,85.5 L1097,85.5" stroke="#444" stroke-width="1.3"/><path d="M1519,65.5 L1529,65.5 L1529,70 L1523.5,70 L1523.5,75.5 L1519,75.5 Z M1544.5,65.5 L1534.5,65.5 L1534.5,70 L1540,70 L1540,75.5 L1544.5,75.5 Z M1519,90.5 L1529,90.5 L1529,86 L1523.5,86 L1523.5,80.5 L1519,80.5 Z M1544.5,90.5 L1534.5,90.5 L1534.5,86 L1540,86 L1540,80.5 L1544.5,80.5 Z" fill="#fff" stroke="#333" stroke-width="1.3"/><path d="M1575,65.5 L1589.5,65.5 L1589.5,89.8 L1582.2,84.3 L1575,89.8 Z" fill="#fff" stroke="#333" stroke-width="1.3"/><path d="M1623,72.5 Q1623,64.5 1632,64.5 Q1641,64.5 1641,72 Q1641,76 1635.5,79 Q1634,80 1634,83 L1629.5,83 Q1629.5,78 1632.5,76 Q1636,74 1636,72 Q1636,69 1632,69 Q1628.5,69 1627.5,72.5 Z M1629.5,85.5 L1634,85.5 L1634,90.5 L1629.5,90.5 Z" fill="#fff" stroke="#333" stroke-width="1.3"/><path d="M1674.5,64.5 L1693.5,64.5 L1693.5,91.5 L1674.5,91.5 Z" fill="#fff" stroke="#333" stroke-width="1.3"/><path d="M1668.5,74.5 L1679,74.5 L1679,70 L1688.5,78 L1679,86 L1679,81.5 L1668.5,81.5 Z" fill="#fff" stroke="#333" stroke-width="1.3"/></svg><div style="position:absolute;left:733.60px;top:27.8px;font-size:15px;line-height:18px;white-space:nowrap;color:#1a1a1a;transform-origin:0 0;transform:scaleX(0.974);">252</div><div style="position:absolute;left:800.50px;top:27.8px;font-size:15px;line-height:18px;white-space:nowrap;color:#1a1a1a;transform-origin:0 0;transform:scaleX(1.002);">25313</div><div style="position:absolute;left:885.30px;top:27.8px;font-size:15px;line-height:18px;white-space:nowrap;color:#1a1a1a;transform-origin:0 0;transform:scaleX(0.922);">74</div><div style="position:absolute;left:943.70px;top:27.8px;font-size:15px;line-height:18px;white-space:nowrap;color:#1a1a1a;transform-origin:0 0;transform:scaleX(1.051);">10866 / 11143</div><div style="position:absolute;left:1082.70px;top:27.8px;font-size:15px;line-height:18px;white-space:nowrap;color:#1a1a1a;transform-origin:0 0;transform:scaleX(0.947);">51%</div><div style="position:absolute;left:745.70px;top:70.8px;font-size:15px;line-height:18px;white-space:nowrap;color:#1a1a1a;transform-origin:0 0;transform:scaleX(1.040);">Home</div><div style="position:absolute;left:861.20px;top:70.8px;font-size:15px;line-height:18px;white-space:nowrap;color:#1a1a1a;transform-origin:0 0;transform:scaleX(1.058);">Shopping</div><div style="position:absolute;left:991.80px;top:70.8px;font-size:15px;line-height:18px;white-space:nowrap;color:#1a1a1a;transform-origin:0 0;transform:scaleX(1.044);">Club</div><div style="position:absolute;left:1107.90px;top:70.8px;font-size:15px;line-height:18px;white-space:nowrap;color:#1a1a1a;transform-origin:0 0;transform:scaleX(1.030);">Settings</div><div class="badge">new</div><div class="invite"></div><div style="position:absolute;left:1151.70px;top:115.8px;font-size:15px;line-height:18px;white-space:nowrap;color:#1a1a1a;transform-origin:0 0;transform:scaleX(1.015);">Invite:</div><svg style="position:absolute;left:0;top:0;pointer-events:none" width="1920" height="969" viewBox="0 0 1920 969"><path d="M1208.1,133.6 C1203.9,129.9 1197.5,126.2 1197.5,120.6 C1197.5,115.9 1201.7,115.0 1203.4,115.0 C1206.0,115.0 1207.5,116.5 1208.1,118.7 C1208.7,116.5 1210.2,115.0 1212.8,115.0 C1214.5,115.0 1218.7,115.9 1218.7,120.6 C1218.7,126.2 1212.3,129.9 1208.1,133.6 Z" fill="#c4c4c4"/><path d="M1238.1,133.6 C1233.9,129.9 1227.5,126.2 1227.5,120.6 C1227.5,115.9 1231.7,115.0 1233.4,115.0 C1236.0,115.0 1237.5,116.5 1238.1,118.7 C1238.7,116.5 1240.2,115.0 1242.8,115.0 C1244.5,115.0 1248.7,115.9 1248.7,120.6 C1248.7,126.2 1242.3,129.9 1238.1,133.6 Z" fill="#9b64a0" stroke="#6a4070" stroke-width="0.7"/></svg>
<div class="hline" style="top:53px"></div><div class="hline" style="top:102px"></div>
<div class="lbl" style="top:115px">1</div>
<div class="lbl" style="top:150px">5</div>
<div class="lbl" style="top:185px">10</div>
<div class="lbl" style="top:220px">15</div>
<div class="lbl" style="top:255px">20</div>
<div class="lbl" style="top:290px">25</div>
<div class="lbl" style="top:325px">30</div>
<div class="lbl" style="top:360px">35</div>
<div class="lbl" style="top:395px">40</div>
<div class="lbl" style="top:430px">45</div>
<div class="lbl" style="top:465px">50</div>
<div class="lbl" style="top:500px">55</div>
<div class="lbl" style="top:535px">60</div>
<div class="lbl" style="top:570px">65</div>
<div class="lbl" style="top:605px">70</div>
<div class="lbl" style="top:640px">75</div>
<div class="lbl" style="top:675px">80</div>
<div class="lbl" style="top:710px">85</div>
<div class="lbl" style="top:745px">90</div>
<div class="lbl" style="top:792px">End</div>
<div class="bar" style="left:775px;top:124px;height:210px;background:#98e08c;border-color:#111"></div>
<div class="bar" style="left:775px;top:334px;height:175px;background:#d2f2cc;border-color:#888"></div>
<div class="bar" style="left:922px;top:194px;height:175px;background:#8ec2ff;border-color:#111"></div>
<div class="bar" style="left:922px;top:369px;height:105px;background:#d2e5fd;border-color:#888"></div>
<div class="bar" style="left:1069px;top:299px;height:245px;background:#dcb0fc;border-color:#111"></div>
<div class="bar" style="left:1069px;top:544px;height:105px;background:#eddcfc;border-color:#999"></div>
<div class="bar" style="left:1216px;top:334px;height:315px;background:#ff9a98;border-color:#111"></div>
<div class="bar" style="left:1216px;top:649px;height:70px;background:#fde8e8;border-color:#ccc"></div>
<div class="bar" style="left:1363px;top:474px;height:140px;background:#ffd0d4;border-color:#111"></div>
<div class="bar" style="left:1363px;top:614px;height:70px;background:#fdedef;border-color:#ccc"></div>
<div class="bar" style="left:1510px;top:404px;height:105px;background:#ffd38c;border-color:#111"></div>
<div class="bar" style="left:1510px;top:509px;height:140px;background:#fde8c8;border-color:#888"></div>
<div class="bar" style="left:1510px;top:649px;height:105px;background:#fdf4e6;border-color:#ccc"></div>
<div class="sk done" style="left:727px;top:108px;width:127px"><div class="ic" style="background:#98e08c"><svg width="30" height="30" viewBox="0 0 30 30" fill="#fff" stroke="#222" stroke-width="1.3" stroke-linejoin="round" stroke-linecap="round"><path d="M4,14 L9,10.5 L12,15 L23.5,6.5 L26,9 L12,20 Z"/></svg></div><span class="t" style="transform:scaleX(0.955)">Trial</span></div>
<div class="sk done" style="left:727px;top:143px;width:127px"><div class="ic" style="background:#98e08c"><svg width="30" height="30" viewBox="0 0 30 30" fill="#fff" stroke="#222" stroke-width="1.3" stroke-linejoin="round" stroke-linecap="round"><circle cx="15" cy="15.5" r="6.2"/><line x1="23.50" y1="15.50" x2="26.00" y2="15.50" stroke-width="1.2"/><line x1="22.85" y1="18.75" x2="25.16" y2="19.71" stroke-width="1.2"/><line x1="21.01" y1="21.51" x2="22.78" y2="23.28" stroke-width="1.2"/><line x1="18.25" y1="23.35" x2="19.21" y2="25.66" stroke-width="1.2"/><line x1="15.00" y1="24.00" x2="15.00" y2="26.50" stroke-width="1.2"/><line x1="11.75" y1="23.35" x2="10.79" y2="25.66" stroke-width="1.2"/><line x1="8.99" y1="21.51" x2="7.22" y2="23.28" stroke-width="1.2"/><line x1="7.15" y1="18.75" x2="4.84" y2="19.71" stroke-width="1.2"/><line x1="6.50" y1="15.50" x2="4.00" y2="15.50" stroke-width="1.2"/><line x1="7.15" y1="12.25" x2="4.84" y2="11.29" stroke-width="1.2"/><line x1="8.99" y1="9.49" x2="7.22" y2="7.72" stroke-width="1.2"/><line x1="11.75" y1="7.65" x2="10.79" y2="5.34" stroke-width="1.2"/><line x1="15.00" y1="7.00" x2="15.00" y2="4.50" stroke-width="1.2"/><line x1="18.25" y1="7.65" x2="19.21" y2="5.34" stroke-width="1.2"/><line x1="21.01" y1="9.49" x2="22.78" y2="7.72" stroke-width="1.2"/><line x1="22.85" y1="12.25" x2="25.16" y2="11.29" stroke-width="1.2"/></svg></div><span class="t" style="transform:scaleX(1.064)">Warmth</span></div>
<div class="sk done s2" style="left:727px;top:178px;width:274px"><div class="ic" style="background:#93dedf"><svg width="30" height="30" viewBox="0 0 30 30" fill="#fff" stroke="#222" stroke-width="1.3" stroke-linejoin="round" stroke-linecap="round"><path d="M15,3.5 A6,6 0 0 1 18.2,14.6 L20.5,25 L9.5,25 L11.8,14.6 A6,6 0 0 1 15,3.5 Z"/></svg></div><span class="t" style="transform:scaleX(0.960)">Teaser</span></div>
<div class="sk done s2" style="left:727px;top:213px;width:274px"><div class="ic" style="background:#93dedf"><svg width="30" height="30" viewBox="0 0 30 30" fill="#fff" stroke="#222" stroke-width="1.3" stroke-linejoin="round" stroke-linecap="round"><path d="M7,5 Q11,9 9,15 Q7,21 11,26 Q8,21 9.5,15 Q11.5,9 7,5 Z M13,5 Q17,9 15,15 Q13,21 17,26 Q14,21 15.5,15 Q17.5,9 13,5 Z M19,5 Q23,9 21,15 Q19,21 23,26 Q20,21 21.5,15 Q23.5,9 19,5 Z" stroke-width="1.4"/></svg></div><span class="t" style="transform:scaleX(1.025)">Heat</span></div>
<div class="sk block" style="left:727px;top:248px;width:127px"><div class="ic" style="background:linear-gradient(90deg,#e4f6e0 0%,#e4f6e0 62%,rgba(255,255,255,0) 100%)"><svg width="30" height="30" viewBox="0 0 30 30" fill="#fff" stroke="#222" stroke-width="1.3" stroke-linejoin="round" stroke-linecap="round"><rect x="5" y="13.5" width="5.5" height="11"/><rect x="10.5" y="5" width="6" height="19.5"/><rect x="16.5" y="18" width="6.5" height="6.5"/></svg></div><span class="t" style="transform:scaleX(0.983)">Boast</span><svg class="forb" width="24" height="24" viewBox="0 0 24 24"><circle cx="12" cy="12" r="9.1" fill="none" stroke="#3a0808" stroke-width="5.4"/><line x1="18.3" y1="5.7" x2="5.7" y2="18.3" stroke="#3a0808" stroke-width="5.2"/><circle cx="12" cy="12" r="9.1" fill="none" stroke="#d41c1c" stroke-width="3.6"/><line x1="18.3" y1="5.7" x2="5.7" y2="18.3" stroke="#d41c1c" stroke-width="3.4"/></svg></div>
<div class="sk done s2" style="left:874px;top:283px;width:274px"><div class="ic" style="background:#a0a6f6"><svg width="30" height="30" viewBox="0 0 30 30" fill="#fff" stroke="#222" stroke-width="1.3" stroke-linejoin="round" stroke-linecap="round"><circle cx="17.5" cy="11" r="7"/><path d="M12.5,16 L5.5,23 L7.5,25 L14.5,18"/></svg></div><span class="t" style="transform:scaleX(1.021)">Discovery</span></div>
<div class="sk fadeblock" style="left:727px;top:318px;width:127px"><div class="ic" style="background:linear-gradient(90deg,#eaf6e8 0%,#eaf6e8 62%,rgba(255,255,255,0) 100%)"><svg width="30" height="30" viewBox="0 0 30 30" fill="#fff" stroke="#222" stroke-width="1.3" stroke-linejoin="round" stroke-linecap="round"><rect x="4" y="9" width="5" height="13"/><rect x="18" y="9" width="5" height="13"/><rect x="9" y="14" width="9" height="2.5"/></svg></div><span class="t" style="transform:scaleX(0.946)">Exercise</span><svg class="forb" width="24" height="24" viewBox="0 0 24 24"><circle cx="12" cy="12" r="9.1" fill="none" stroke="#d88a8a" stroke-width="5.4"/><line x1="18.3" y1="5.7" x2="5.7" y2="18.3" stroke="#d88a8a" stroke-width="5.2"/><circle cx="12" cy="12" r="9.1" fill="none" stroke="#e88787" stroke-width="3.6"/><line x1="18.3" y1="5.7" x2="5.7" y2="18.3" stroke="#e88787" stroke-width="3.4"/></svg></div>
<div class="sk done s2" style="left:1021px;top:318px;width:274px"><div class="ic" style="background:#f590c0"><svg width="30" height="30" viewBox="0 0 30 30" fill="#fff" stroke="#222" stroke-width="1.3" stroke-linejoin="round" stroke-linecap="round"><path d="M10.5,3.5 L18,3.5 L17,17 L13.7,17 Z"/><rect x="13.2" y="20.4" width="4.8" height="3.8"/></svg></div><span class="t" style="transform:scaleX(1.073)">Incident</span></div>
<div class="sk block" style="left:874px;top:353px;width:127px"><div class="ic" style="background:linear-gradient(90deg,#e2eefc 0%,#e2eefc 62%,rgba(255,255,255,0) 100%)"><svg width="30" height="30" viewBox="0 0 30 30" fill="#fff" stroke="#222" stroke-width="1.3" stroke-linejoin="round" stroke-linecap="round"><path d="M4.5,7 Q9.5,5.5 14.7,7 L14.7,23.5 Q9.5,22 4.5,23.5 Z M14.7,7 Q20,5.5 25.2,7 L25.2,23.5 Q20,22 14.7,23.5 Z" stroke-width="1.5"/></svg></div><span class="t" style="transform:scaleX(0.964)">Lesson</span><svg class="forb" width="24" height="24" viewBox="0 0 24 24"><circle cx="12" cy="12" r="9.1" fill="none" stroke="#3a0808" stroke-width="5.4"/><line x1="18.3" y1="5.7" x2="5.7" y2="18.3" stroke="#3a0808" stroke-width="5.2"/><circle cx="12" cy="12" r="9.1" fill="none" stroke="#d41c1c" stroke-width="3.6"/><line x1="18.3" y1="5.7" x2="5.7" y2="18.3" stroke="#d41c1c" stroke-width="3.4"/></svg></div>
<div class="sk done s2" style="left:1021px;top:353px;width:274px"><div class="ic" style="background:#f590c0"><svg width="30" height="30" viewBox="0 0 30 30" fill="#fff" stroke="#222" stroke-width="1.3" stroke-linejoin="round" stroke-linecap="round"><path d="M6.6,6.4 L16,6.4 L16,4.3 L26,8.3 L16,12.4 L16,10.2 L6.6,10.2 Z M26.5,17.8 L17,17.8 L17,15.7 L7,20 L17,24.3 L17,22.2 L26.5,22.2 Z"/></svg></div><span class="t" style="transform:scaleX(0.972)">Service</span></div>
<div class="sk fadeblock" style="left:727px;top:388px;width:127px"><div class="ic" style="background:linear-gradient(90deg,#eaf6e8 0%,#eaf6e8 62%,rgba(255,255,255,0) 100%)"><svg width="30" height="30" viewBox="0 0 30 30" fill="#fff" stroke="#222" stroke-width="1.3" stroke-linejoin="round" stroke-linecap="round"><path d="M15,16 L15,26 M15,22 Q10,22 9,18 Q13,18 15,22 M15,24 Q20,23 21,19 Q17,19 15,24 M10,5 L12,8 L15,4 L18,8 L20,5 L20,11 Q20,16 15,16 Q10,16 10,11 Z"/></svg></div><span class="t" style="transform:scaleX(1.006)">Date</span><svg class="forb" width="24" height="24" viewBox="0 0 24 24"><circle cx="12" cy="12" r="9.1" fill="none" stroke="#d88a8a" stroke-width="5.4"/><line x1="18.3" y1="5.7" x2="5.7" y2="18.3" stroke="#d88a8a" stroke-width="5.2"/><circle cx="12" cy="12" r="9.1" fill="none" stroke="#e88787" stroke-width="3.6"/><line x1="18.3" y1="5.7" x2="5.7" y2="18.3" stroke="#e88787" stroke-width="3.4"/></svg></div>
<div class="sk fadeblock" style="left:874px;top:388px;width:127px"><div class="ic" style="background:linear-gradient(90deg,#eaf2fc 0%,#eaf2fc 62%,rgba(255,255,255,0) 100%)"><svg width="30" height="30" viewBox="0 0 30 30" fill="#fff" stroke="#222" stroke-width="1.3" stroke-linejoin="round" stroke-linecap="round"><path d="M4,5 Q12,12 14,15 Q12,18 4,26 Q8,20 8,15.5 Q8,11 4,5 Z M26,5 Q18,12 16,15 Q18,18 26,26 Q22,20 22,15.5 Q22,11 26,5 Z"/></svg></div><span class="t" style="transform:scaleX(0.968)">Hassle</span><svg class="forb" width="24" height="24" viewBox="0 0 24 24"><circle cx="12" cy="12" r="9.1" fill="none" stroke="#d88a8a" stroke-width="5.4"/><line x1="18.3" y1="5.7" x2="5.7" y2="18.3" stroke="#d88a8a" stroke-width="5.2"/><circle cx="12" cy="12" r="9.1" fill="none" stroke="#e88787" stroke-width="3.6"/><line x1="18.3" y1="5.7" x2="5.7" y2="18.3" stroke="#e88787" stroke-width="3.4"/></svg></div>
<div class="sk done s2" style="left:1021px;top:388px;width:274px"><div class="ic" style="background:#f590c0"><svg width="30" height="30" viewBox="0 0 30 30" fill="#fff" stroke="#222" stroke-width="1.3" stroke-linejoin="round" stroke-linecap="round"><rect x="6.4" y="5.6" width="19.7" height="18.4" stroke-width="1.5"/><circle cx="12" cy="11.6" r="2.3"/><circle cx="21.2" cy="19.2" r="2.3"/></svg></div><span class="t" style="transform:scaleX(1.100)">Option</span></div>
<div class="sk avail" style="left:1462px;top:388px;width:127px"><div class="ic" style="background:linear-gradient(90deg,#fff1de 0%,#fff1de 62%,rgba(255,255,255,0) 100%)"><svg width="30" height="30" viewBox="0 0 30 30" fill="#fff" stroke="#222" stroke-width="1.3" stroke-linejoin="round" stroke-linecap="round"><rect x="6.3" y="3.2" width="17.4" height="21.5" stroke-width="1.4"/><path d="M13.6,6.2 L21.6,13.7 M8.7,10.4 L21.2,21.7 M8.7,18.7 L13.3,23.2" stroke-width="1.3"/></svg></div><span class="t" style="transform:scaleX(1.106)">Mirror</span></div>
<div class="sk fadeblock" style="left:727px;top:423px;width:127px"><div class="ic" style="background:linear-gradient(90deg,#eaf6e8 0%,#eaf6e8 62%,rgba(255,255,255,0) 100%)"><svg width="30" height="30" viewBox="0 0 30 30" fill="#fff" stroke="#222" stroke-width="1.3" stroke-linejoin="round" stroke-linecap="round"><path d="M23,10 A10,10 0 1 0 25,15" fill="none" stroke-width="1.4"/><path d="M18,6 L24,6 L24,12" fill="none" stroke-width="1.4"/></svg></div><span class="t" style="transform:scaleX(1.035)">Custom</span><svg class="forb" width="24" height="24" viewBox="0 0 24 24"><circle cx="12" cy="12" r="9.1" fill="none" stroke="#d88a8a" stroke-width="5.4"/><line x1="18.3" y1="5.7" x2="5.7" y2="18.3" stroke="#d88a8a" stroke-width="5.2"/><circle cx="12" cy="12" r="9.1" fill="none" stroke="#e88787" stroke-width="3.6"/><line x1="18.3" y1="5.7" x2="5.7" y2="18.3" stroke="#e88787" stroke-width="3.4"/></svg></div>
<div class="sk fadeblock" style="left:874px;top:423px;width:127px"><div class="ic" style="background:linear-gradient(90deg,#eaf2fc 0%,#eaf2fc 62%,rgba(255,255,255,0) 100%)"><svg width="30" height="30" viewBox="0 0 30 30" fill="#fff" stroke="#222" stroke-width="1.3" stroke-linejoin="round" stroke-linecap="round"><circle cx="8" cy="23" r="3"/><circle cx="22" cy="8" r="3"/><line x1="10" y1="21" x2="20" y2="10"/></svg></div><span class="t" style="transform:scaleX(0.998)">Link</span><svg class="forb" width="24" height="24" viewBox="0 0 24 24"><circle cx="12" cy="12" r="9.1" fill="none" stroke="#d88a8a" stroke-width="5.4"/><line x1="18.3" y1="5.7" x2="5.7" y2="18.3" stroke="#d88a8a" stroke-width="5.2"/><circle cx="12" cy="12" r="9.1" fill="none" stroke="#e88787" stroke-width="3.6"/><line x1="18.3" y1="5.7" x2="5.7" y2="18.3" stroke="#e88787" stroke-width="3.4"/></svg></div>
<div class="sk done" style="left:1168px;top:423px;width:127px"><div class="ic" style="background:#ff9a98"><svg width="30" height="30" viewBox="0 0 30 30" fill="#fff" stroke="#222" stroke-width="1.3" stroke-linejoin="round" stroke-linecap="round"><path d="M8.5,8.5 L16,3.5 L20,3.5 L20,19 L23.5,19 L23.5,24.5 L9.5,24.5 L9.5,19 L13,19 L13,11 L10,12.5 Z" stroke-width="1.5"/></svg></div><span class="t" style="transform:scaleX(1.056)">Debut</span></div>
<div class="sk fadeblock" style="left:874px;top:458px;width:127px"><div class="ic" style="background:linear-gradient(90deg,#eaf2fc 0%,#eaf2fc 62%,rgba(255,255,255,0) 100%)"><svg width="30" height="30" viewBox="0 0 30 30" fill="#fff" stroke="#222" stroke-width="1.3" stroke-linejoin="round" stroke-linecap="round"><path d="M7,5 L22,5 Q19,10 21,15 Q23,21 22,26 L8,26 Q10,21 8,15 Q6,10 7,5 Z M11,11 L17,11 M11,15.5 L18,15.5 M11,20 L18,20"/></svg></div><span class="t" style="transform:scaleX(0.963)">Rule</span><svg class="forb" width="24" height="24" viewBox="0 0 24 24"><circle cx="12" cy="12" r="9.1" fill="none" stroke="#d88a8a" stroke-width="5.4"/><line x1="18.3" y1="5.7" x2="5.7" y2="18.3" stroke="#d88a8a" stroke-width="5.2"/><circle cx="12" cy="12" r="9.1" fill="none" stroke="#e88787" stroke-width="3.6"/><line x1="18.3" y1="5.7" x2="5.7" y2="18.3" stroke="#e88787" stroke-width="3.4"/></svg></div>
<div class="sk avail" style="left:1021px;top:458px;width:127px"><div class="ic" style="background:linear-gradient(90deg,#f1e6fc 0%,#f1e6fc 62%,rgba(255,255,255,0) 100%)"><svg width="30" height="30" viewBox="0 0 30 30" fill="#fff" stroke="#222" stroke-width="1.3" stroke-linejoin="round" stroke-linecap="round"><circle cx="19" cy="11.5" r="6.8" stroke-width="1.5"/><circle cx="11.5" cy="19" r="6.8" stroke-width="1.5"/><circle cx="19" cy="11.5" r="6.05" stroke="none"/><circle cx="11.5" cy="19" r="6.05" stroke="none"/></svg></div><span class="t" style="transform:scaleX(1.074)">Merger</span></div>
<div class="sk done" style="left:1168px;top:458px;width:127px"><div class="ic" style="background:#ff9a98"><svg width="30" height="30" viewBox="0 0 30 30" fill="#fff" stroke="#222" stroke-width="1.3" stroke-linejoin="round" stroke-linecap="round"><path d="M7,5 L23,5 Q18,10 18,18 L22,18 L15,26 L8,18 L12,18 Q12,10 7,5 Z" stroke-width="1.4"/></svg></div><span class="t" style="transform:scaleX(1.021)">Plunge</span></div>
<div class="sk done" style="left:1315px;top:458px;width:127px"><div class="ic" style="background:#ffd0d4"><svg width="30" height="30" viewBox="0 0 30 30" fill="#fff" stroke="#222" stroke-width="1.3" stroke-linejoin="round" stroke-linecap="round"><path d="M15,4 L17.6,11.8 L26,11.9 L19.3,16.9 L21.8,25 L15,20.1 L8.2,25 L10.7,16.9 L4,11.9 L12.4,11.8 Z" stroke-width="1.4"/></svg></div><span class="t" style="transform:scaleX(1.008)">Show</span></div>
<div class="sk fadeblock" style="left:727px;top:493px;width:127px"><div class="ic" style="background:linear-gradient(90deg,#eaf6e8 0%,#eaf6e8 62%,rgba(255,255,255,0) 100%)"><svg width="30" height="30" viewBox="0 0 30 30" fill="#fff" stroke="#222" stroke-width="1.3" stroke-linejoin="round" stroke-linecap="round"><path d="M4,25 L13.5,7 L24,25 Z M10.5,13 L13,14.5 L15.5,12.5 L17,14" fill="none" stroke-width="1.3"/></svg></div><span class="t" style="transform:scaleX(1.052)">Summit</span><svg class="forb" width="24" height="24" viewBox="0 0 24 24"><circle cx="12" cy="12" r="9.1" fill="none" stroke="#d88a8a" stroke-width="5.4"/><line x1="18.3" y1="5.7" x2="5.7" y2="18.3" stroke="#d88a8a" stroke-width="5.2"/><circle cx="12" cy="12" r="9.1" fill="none" stroke="#e88787" stroke-width="3.6"/><line x1="18.3" y1="5.7" x2="5.7" y2="18.3" stroke="#e88787" stroke-width="3.4"/></svg></div>
<div class="sk done" style="left:1168px;top:493px;width:127px"><div class="ic" style="background:#ff9a98"><svg width="30" height="30" viewBox="0 0 30 30" fill="#fff" stroke="#222" stroke-width="1.3" stroke-linejoin="round" stroke-linecap="round"><path d="M9,6 L21,6 L21,13 Q21,19 15,19 Q9,19 9,13 Z M9,8 Q5,8 5.5,12 Q6,16 10,16 M21,8 Q25,8 24.5,12 Q24,16 20,16 M15,19 L15,24 M11.5,25.5 L18.5,25.5 Q17,23.5 15,23.5 Q13,23.5 11.5,25.5 Z" stroke-width="1.4"/></svg></div><span class="t" style="transform:scaleX(1.058)">Bounty</span></div>
<div class="sk fade" style="left:1462px;top:493px;width:127px"><div class="ic" style="background:linear-gradient(90deg,#fdf3e6 0%,#fdf3e6 62%,rgba(255,255,255,0) 100%)"><svg width="30" height="30" viewBox="0 0 30 30" fill="#fff" stroke="#222" stroke-width="1.3" stroke-linejoin="round" stroke-linecap="round"><rect x="6" y="11" width="18" height="15"/><rect x="5" y="8" width="20" height="4"/><path d="M15,8 L15,26 M15,8 Q10,2 9,6 Q9,8 15,8 Q20,2 21,6 Q21,8 15,8"/></svg></div><span class="t" style="transform:scaleX(0.997)">Surprise</span></div>
<div class="sk fade" style="left:1021px;top:528px;width:127px"><div class="ic" style="background:linear-gradient(90deg,#f4ecfc 0%,#f4ecfc 62%,rgba(255,255,255,0) 100%)"><svg width="30" height="30" viewBox="0 0 30 30" fill="#fff" stroke="#222" stroke-width="1.3" stroke-linejoin="round" stroke-linecap="round"><path d="M3,7 L8,7 L14,15.5 L8,24 L3,24 L9,15.5 Z M10,7 L15,7 L21,15.5 L15,24 L10,24 L16,15.5 Z M17,7 L22,7 L28,15.5 L22,24 L17,24 L23,15.5 Z"/></svg></div><span class="t" style="transform:scaleX(1.049)">Urge</span></div>
<div class="sk avail" style="left:1315px;top:528px;width:127px"><div class="ic" style="background:linear-gradient(90deg,#ffd0d4 0%,#ffd0d4 62%,rgba(255,255,255,0) 100%)"><svg width="30" height="30" viewBox="0 0 30 30" fill="#fff" stroke="#222" stroke-width="1.3" stroke-linejoin="round" stroke-linecap="round"><path d="M6,5 L22,5 L22,11 Q22,19 14,19 Q6,19 6,11 Z M14,19 L14,25 M9,25.5 L19,25.5" stroke-width="1.4"/><path d="M6,9 Q10,7 14,9 Q18,11 22,8" fill="none" stroke-width="1.1"/></svg></div><span class="t" style="transform:scaleX(1.045)">Courtship</span></div>
<div class="sk fade" style="left:1021px;top:563px;width:127px"><div class="ic" style="background:linear-gradient(90deg,#f4ecfc 0%,#f4ecfc 62%,rgba(255,255,255,0) 100%)"><svg width="30" height="30" viewBox="0 0 30 30" fill="#fff" stroke="#222" stroke-width="1.3" stroke-linejoin="round" stroke-linecap="round"><path d="M13,27 L5,15 Q8,6 15,5 L22,12 Q16,13 15,21 L9,17" stroke-width="1.2"/></svg></div><span class="t" style="transform:scaleX(0.983)">Cession</span></div>
<div class="sk avail" style="left:1168px;top:563px;width:127px"><div class="ic" style="background:linear-gradient(90deg,#ffe6e6 0%,#ffe6e6 62%,rgba(255,255,255,0) 100%)"><svg width="30" height="30" viewBox="0 0 30 30" fill="#fff" stroke="#222" stroke-width="1.3" stroke-linejoin="round" stroke-linecap="round"><path d="M4,7 L7,4 L15,12 L23,4 L26,7 L18,15 L26,23 L23,26 L15,18 L7,26 L4,23 L12,15 Z" stroke-width="1.3"/></svg></div><span class="t" style="transform:scaleX(1.009)">Revolt</span></div>
<div class="sk fade" style="left:1462px;top:563px;width:127px"><div class="ic" style="background:linear-gradient(90deg,#fdf3e6 0%,#fdf3e6 62%,rgba(255,255,255,0) 100%)"><svg width="30" height="30" viewBox="0 0 30 30" fill="#fff" stroke="#222" stroke-width="1.3" stroke-linejoin="round" stroke-linecap="round"><path d="M4,26 L18,11" stroke-width="3"/><path d="M4,26 L18,11" stroke="#fff" stroke-width="1.2"/><path d="M20,3 L21.5,7.5 L26,8 L22.5,11 L23.5,15.5 L19.5,13 L15.5,15 L16.5,10.5 L13,7.5 L18,7.5 Z" stroke-width="1.1"/></svg></div><span class="t" style="transform:scaleX(1.060)">Wonder</span></div>
<div class="sk avail" style="left:1315px;top:598px;width:127px"><div class="ic" style="background:linear-gradient(90deg,#fde2e5 0%,#fde2e5 62%,rgba(255,255,255,0) 100%)"><svg width="30" height="30" viewBox="0 0 30 30" fill="#fff" stroke="#222" stroke-width="1.3" stroke-linejoin="round" stroke-linecap="round"><path d="M6,17 A9,9 0 0 1 20,7 L22,4 L23,12 L15,11 L18,9 A6.5,6.5 0 0 0 8.5,16 Z M24,13 A9,9 0 0 1 10,23 L8,26 L7,18 L15,19 L12,21 A6.5,6.5 0 0 0 21.5,14 Z" stroke-width="1.2"/></svg></div><span class="t" style="transform:scaleX(1.041)">Double</span></div>
<div class="sk ghost" style="left:1021px;top:633px;width:127px"><div class="ic" style="background:linear-gradient(90deg,#faf6fc 0%,#faf6fc 62%,rgba(255,255,255,0) 100%)"><svg width="30" height="30" viewBox="0 0 30 30" fill="#fff" stroke="#222" stroke-width="1.3" stroke-linejoin="round" stroke-linecap="round"><circle cx="8" cy="8" r="3"/><circle cx="22" cy="23" r="3"/><path d="M21,5 L24,8 L9,26 L6,23 Z"/></svg></div><span class="t" style="transform:scaleX(1.000)">?</span></div>
<div class="sk ghost" style="left:1168px;top:633px;width:127px"><div class="ic" style="background:linear-gradient(90deg,#fdf6f6 0%,#fdf6f6 62%,rgba(255,255,255,0) 100%)"><svg width="30" height="30" viewBox="0 0 30 30" fill="#fff" stroke="#222" stroke-width="1.3" stroke-linejoin="round" stroke-linecap="round"><path d="M15,26 Q4,18 4,11 Q4,5 9.5,5 Q13,5 15,9 Q17,5 20.5,5 Q26,5 26,11 Q26,18 15,26 Z"/><path d="M15,21 Q9,16 9,12 Q9,9 12,9 Q14,9 15,12 Q16,9 18,9 Q21,9 21,12 Q21,16 15,21 Z"/></svg></div><span class="t" style="transform:scaleX(1.000)">?</span></div>
<div class="sk ghost" style="left:1462px;top:633px;width:127px"><div class="ic" style="background:linear-gradient(90deg,#fdfaf4 0%,#fdfaf4 62%,rgba(255,255,255,0) 100%)"><svg width="30" height="30" viewBox="0 0 30 30" fill="#fff" stroke="#222" stroke-width="1.3" stroke-linejoin="round" stroke-linecap="round"><path d="M4,8 L8,4 L14,11 L11,14 L20,21 L21,17 L24,27 L15,25 L18,23 L8,16 L12,12 Z"/></svg></div><span class="t" style="transform:scaleX(1.000)">?</span></div>
<div class="sk ghost" style="left:1315px;top:668px;width:127px"><div class="ic" style="background:linear-gradient(90deg,#fdf6f6 0%,#fdf6f6 62%,rgba(255,255,255,0) 100%)"><svg width="30" height="30" viewBox="0 0 30 30" fill="#fff" stroke="#222" stroke-width="1.3" stroke-linejoin="round" stroke-linecap="round"><path d="M11,21 Q11,18 8.5,15 Q6.5,12 8,8.5 Q10,5 15,5 Q20,5 22,8.5 Q23.5,12 21.5,15 Q19,18 19,21 Z M12,21 L12,25 L18,25 L18,21 M3,12 L5,12 M25,12 L27,12 M6,4 L7.5,5.5 M24,4 L22.5,5.5 M15,1 L15,3 M4,19 L6,18 M26,19 L24,18"/></svg></div><span class="t" style="transform:scaleX(1.000)">?</span></div>
<div class="sk ghost" style="left:1168px;top:703px;width:127px"><div class="ic" style="background:linear-gradient(90deg,#fdf6f6 0%,#fdf6f6 62%,rgba(255,255,255,0) 100%)"><svg width="30" height="30" viewBox="0 0 30 30" fill="#fff" stroke="#222" stroke-width="1.3" stroke-linejoin="round" stroke-linecap="round"><path d="M4,9 L9,15 L15,7 L21,15 L26,9 L24,23 L6,23 Z M6,19 L24,19"/></svg></div><span class="t" style="transform:scaleX(1.000)">?</span></div>
<div class="sk ghost" style="left:1462px;top:738px;width:127px"><div class="ic" style="background:linear-gradient(90deg,#fdfaf4 0%,#fdfaf4 62%,rgba(255,255,255,0) 100%)"><svg width="30" height="30" viewBox="0 0 30 30" fill="#fff" stroke="#222" stroke-width="1.3" stroke-linejoin="round" stroke-linecap="round"><path d="M5,4 Q15,8 25,4 Q21,15 25,26 Q15,22 5,26 Q9,15 5,4 Z"/></svg></div><span class="t" style="transform:scaleX(1.000)">?</span></div>
<svg style="position:absolute;left:0;top:0" width="1920" height="969" viewBox="0 0 1920 969"><path d="M789.2,854.6 C776,842 756,830 756,808 C756,796 764,790 773,790 C781,790 786,795 789.2,800 C792.5,795 797,790 806,790 C815,790 822.5,796 822.5,808 C822.5,830 802,842 789.2,854.6 Z" fill="#c9ecc3" stroke="#86a884" stroke-width="1.6"/><g fill="none" stroke="#86a080" stroke-width="1.5"><ellipse cx="789.5" cy="812" rx="8.5" ry="8"/><ellipse cx="789.5" cy="812" rx="6" ry="5.5"/><ellipse cx="787.5" cy="821" rx="8.5" ry="8"/><ellipse cx="787.5" cy="821" rx="6" ry="5.5"/><path d="M795.5,806 L809,795.5 M802.5,795 L809.5,795 L809.5,802 M787.5,829 L787.5,850 M783,845 L792,845"/></g><g fill="#fff" stroke="#8c8c8c" stroke-width="1.5" stroke-linejoin="miter"><path d="M923.6,806.5 L930.7,822.4 L948.0,822.9 L935.1,834.5 L939.9,851.2 L924.9,842.5 L910.5,852.2 L914.2,835.3 L900.5,824.6 L917.7,822.8 Z"/><path d="M959.4,788.6 L961.1,801.7 L973.5,806.0 L961.6,811.6 L961.3,824.7 L952.3,815.2 L939.7,819.0 L946.0,807.4 L938.6,796.7 L951.5,799.1 Z"/><path d="M953.8,827.7 L959.6,836.7 L970.2,835.7 L963.4,844.0 L967.6,853.8 L957.7,849.9 L949.7,856.9 L950.3,846.3 L941.2,840.8 L951.5,838.1 Z"/></g><g fill="#ecdaf8" stroke="#9f8ca8" stroke-width="1.4" stroke-linejoin="round"><path d="M1075.4,789.2 L1082.6,789.6 Q1087,794 1091.1,789.6 L1096.7,789.2 L1104.4,796.5 L1098.3,802.5 L1095.1,800.5 Q1093,806 1093.5,810.2 L1096.3,819 L1075.4,818.6 L1078.2,810.2 Q1078.5,806 1077.4,800.5 L1073.4,802.1 L1067.7,796.5 Z"/><path d="M1056,823.5 L1077,823.5 L1081,850 Q1081,854.5 1070,854.5 L1058,854.5 Q1052.5,854.5 1052.5,850 Z"/><path d="M1056,827.5 L1077.5,827.5" fill="none"/><path d="M1091,824 Q1086,826 1087.5,832 L1088,853 L1090,853 L1091.5,836 Q1096,836 1101,845 Q1106,854 1117.5,854 Q1119,852 1116,849 Q1108,846 1103,836 Q1098,826 1091,824 Z"/></g><g fill="#fff" stroke="#8c8c8c" stroke-width="1.4" stroke-linejoin="round" stroke-linecap="round"><path d="M1258.5,793.8 Q1262.5,799 1258.5,805 L1241.5,820.5 L1241,823.5 L1236.5,826 L1207,857.3 L1202.7,852.5 L1230.5,824 L1232.5,820.5 L1237,817.5 Z"/><path d="M1199.3,790.9 L1216.6,808.2" fill="none"/><path d="M1216.3,807.8 L1218.5,807.8 L1229.5,817.5 L1225.5,821 L1216,810.8 Z"/><path d="M1229,818.5 L1257.7,841.2 L1249.2,848.2 L1224.5,824.3 L1226,820.5 Z"/><path d="M1256.5,837.8 L1259.8,841.2 L1249.5,852.3 L1246,849 Z"/><path d="M1253.5,846.5 L1261.5,851.5 L1263.2,854 L1259.5,857.8 L1257,856.5 L1250.5,850.5 Z"/></g><g fill="#fff" stroke="#8c8c8c" stroke-width="1.4" stroke-linejoin="round"><rect x="1344" y="792.5" width="12.3" height="59.5" rx="6"/><path d="M1347,834.5 L1353.5,834.5" fill="none"/><path d="M1369.5,819.5 L1369.5,796 Q1369.5,793.2 1374.3,793.2 Q1379.1,793.2 1379.1,796 L1379.1,819.5 Z"/><rect x="1368.5" y="819.5" width="11.6" height="3.5"/><path d="M1368.5,823 L1380.2,823 L1388.8,849.3 L1361.6,849.3 Z"/><path d="M1364.5,849.3 L1386,849.3 L1385,852.8 L1365.5,852.8 Z"/><path d="M1389.6,793.2 L1413.9,793.2 L1410.5,849 Q1410,852.8 1406,852.8 L1397,852.8 Q1393.5,852.8 1393,849 Z"/><path d="M1389.9,797 L1413.6,797 M1392.2,840 L1410.8,840" fill="none"/></g><g stroke="#8c8c8c" stroke-width="1.5"><line x1="1550.4" y1="826.8" x2="1559.9" y2="826.8"/><line x1="1547.1" y1="839.0" x2="1553.2" y2="842.5"/><line x1="1538.2" y1="848.0" x2="1540.7" y2="852.5"/><line x1="1525.9" y1="851.3" x2="1525.9" y2="855.8"/><line x1="1513.7" y1="848.0" x2="1511.1" y2="852.5"/><line x1="1504.7" y1="839.0" x2="1498.6" y2="842.5"/><line x1="1501.4" y1="826.8" x2="1491.9" y2="826.8"/><line x1="1504.7" y1="814.5" x2="1494.3" y2="808.5"/><line x1="1513.7" y1="805.6" x2="1506.7" y2="793.6"/><line x1="1525.9" y1="802.3" x2="1525.9" y2="787.8"/><line x1="1538.2" y1="805.6" x2="1545.1" y2="793.6"/><line x1="1547.1" y1="814.5" x2="1557.5" y2="808.5"/></g><circle cx="1525.9" cy="826.8" r="20.9" fill="#fff" stroke="#ee7b7b" stroke-width="4.6"/><g stroke="#8c8c8c" stroke-width="1.1"><rect x="1516.1" y="831.9" width="4.9" height="5.7" fill="#ee7b7b"/><rect x="1521.0" y="826.2" width="4.9" height="11.4" fill="#ee7b7b"/><rect x="1525.9" y="822.6" width="4.9" height="15.0" fill="#fff"/><rect x="1530.8" y="817.5" width="4.9" height="20.1" fill="#fff"/></g><g fill="#c9ecc3" stroke="#88a486" stroke-width="1.4" stroke-linejoin="round"><path d="M784.5,874.8 L796.5,874.8 L799,879.5 L796.8,886 L784.7,886 L782.3,879.5 Z"/><path d="M784.7,886 L796.8,886 L800.5,925.6 L790.9,938.8 L781.2,925.6 Z"/></g><g fill="#c8dcf7" stroke="#8596a8" stroke-width="1.4" stroke-linejoin="round"><circle cx="918.3" cy="889" r="8.9"/><circle cx="939.3" cy="885.5" r="12.4"/><rect x="906" y="898.5" width="47.3" height="29.7" rx="3.5"/><path d="M953.3,909 L970.5,902 L970.5,922 L953.3,917 Z"/><rect x="911" y="903.8" width="16.8" height="4.4" rx="1"/></g><g fill="#fff" stroke="#8c8c8c" stroke-width="1.5"><path d="M1076,929.5 L1078,928.5 M1091,917.5 L1092,916.3 M1100.5,902.5 L1101,900.8 M1106,886.5 L1106.5,884.8" stroke-width="3"/><rect x="1055.8" y="934.3" width="3.4" height="3.4"/><circle cx="1067.8" cy="933.1" r="8.3"/><circle cx="1085.5" cy="925.3" r="7.8"/><circle cx="1096.7" cy="910" r="7.4"/><circle cx="1103.7" cy="893.9" r="6.8"/><circle cx="1108.6" cy="878.6" r="6.2"/></g><g stroke="#a08890" stroke-width="1.3" stroke-linejoin="round"><path d="M1238.5,887.5 L1244.5,873 L1251,875 L1244.5,889.5 Z" fill="#f6c8cc"/><path d="M1208,897 L1212.5,897.5 L1246.5,920 L1245.8,940.4 L1215,940.4 L1212.5,900 Z" fill="#f8cfd3"/></g><circle cx="1231.8" cy="910.6" r="20.6" fill="#fff" stroke="#ee7b7b" stroke-width="5"/><g stroke="#8c8c8c" stroke-width="1.1"><rect x="1222.1" y="916.2" width="4.9" height="5.1" fill="#ee7b7b"/><rect x="1227.0" y="910.2" width="4.9" height="11.1" fill="#ee7b7b"/><rect x="1231.9" y="906" width="4.9" height="15.3" fill="#fff"/><rect x="1236.8" y="901.4" width="4.9" height="19.9" fill="#fff"/></g><g fill="#fff" stroke="#8c8c8c" stroke-width="1.3" stroke-linejoin="round"><path d="M1343.2,889.6 L1358,884 L1394.9,927.4 L1365.1,940.5 Z"/><path d="M1351.9,880.9 L1367,875 L1390,929 L1366,934.4 Z"/><path d="M1367.7,872.1 L1408.1,870.4 L1409.8,924.7 L1369.5,926.5 Z"/></g><g stroke="#8c8c8c" stroke-width="1.6" fill="none"><path d="M1372.5,876.5 L1379.5,876.5" /><path d="M1382.5,876.5 L1399.5,876.5" /><path d="M1372.5,880.7 L1389.5,880.7" /><path d="M1394.5,880.7 L1399.5,880.7" /><path d="M1372.5,884.9 L1377.5,884.9" /><path d="M1380.5,884.9 L1387.5,884.9" /><path d="M1372.5,889.1 L1382.5,889.1" /><path d="M1385.5,889.1 L1399.5,889.1" /><path d="M1372.5,893.3 L1399.5,893.3" /><path d="M1372.5,897.5 L1377.5,897.5" /><path d="M1380.5,897.5 L1399.5,897.5" /><path d="M1372.5,901.7 L1385.5,901.7" /><path d="M1389.5,901.7 L1399.5,901.7" /><path d="M1372.5,905.9 L1394.5,905.9" /><path d="M1396.5,905.9 L1399.5,905.9" /><path d="M1372.5,910.1 L1377.5,910.1" /><path d="M1381.5,910.1 L1399.5,910.1" /><path d="M1372.5,914.3 L1387.5,914.3" /><path d="M1390.5,914.3 L1399.5,914.3" /><path d="M1372.5,918.5 L1378.5,918.5" /><path d="M1381.5,918.5 L1399.5,918.5" /></g><g stroke="#8c8c8c" stroke-width="1.2"><path d="M1349,897 L1352,896 M1351,903 L1354,902 M1353,909 L1356,908 M1355.5,915 L1358.5,914 M1358,921 L1361,920 M1359,888 L1363,887 M1361,894 L1365,893 M1363,900 L1367,899 M1365,907 L1369,906 M1366,913 L1370,912 M1368,919 L1369,919"/></g><g transform="rotate(-24 1525.2 905.9)"><rect x="1494.2" y="890.9" width="62" height="30" rx="2.5" fill="#f7e5bf" stroke="#8f8574" stroke-width="1.5"/><text x="1520" y="907" text-anchor="middle" font-family="Liberation Sans" font-weight="bold" font-size="20" fill="#7a7168">RYO</text><path d="M1499,912.5 L1510,912.5 M1514,912.5 L1522,912.5 M1526,912.5 L1552,912.5 M1537,908.5 L1551,908.5 M1500,916.5 L1526,916.5 M1530,916.5 L1540,916.5" stroke="#8f8574" stroke-width="1.4"/></g></svg>
</body></html>
